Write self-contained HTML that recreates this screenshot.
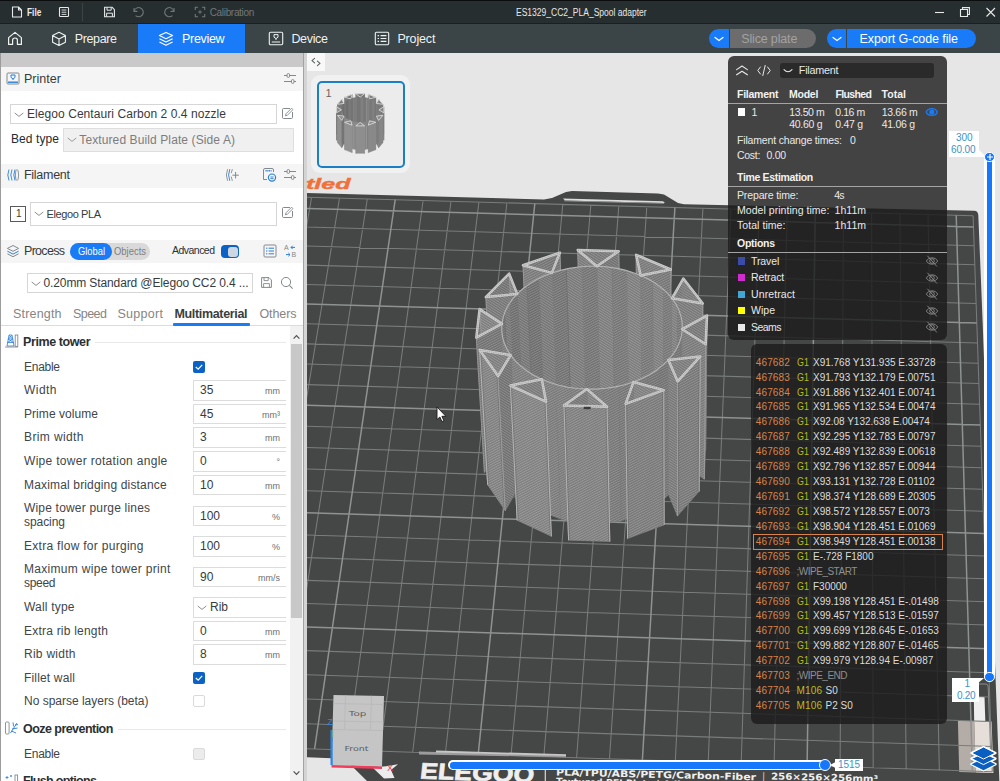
<!DOCTYPE html><html lang="en"><head><meta charset="utf-8"><title>ES1329_CC2_PLA_Spool adapter</title><style>
*{box-sizing:border-box;margin:0;padding:0}
html,body{width:1000px;height:781px;overflow:hidden;background:#fff}
body{font-family:"Liberation Sans",sans-serif;font-size:12px;color:#333}
#app{position:relative;width:1000px;height:781px;overflow:hidden;background:#fff}
.t{position:absolute;white-space:pre;display:block}
.a{position:absolute;display:block}
svg{position:absolute;display:block;overflow:visible}
#scene{left:0;top:0}
</style></head><body><div id="app">
<svg id="scene" width="1000" height="781" viewBox="0 0 1000 781">
<defs><clipPath id="vp"><rect x="307" y="53" width="693" height="728"/></clipPath><pattern id="hatch" width="2.2" height="2.2" patternUnits="userSpaceOnUse" patternTransform="rotate(-28)"><rect width="2.2" height="1" fill="#ffffff" opacity="0.17"/><rect y="1.1" width="2.2" height="1" fill="#000000" opacity="0.09"/></pattern><pattern id="hatch2" width="2.2" height="2.2" patternUnits="userSpaceOnUse" patternTransform="rotate(32)"><rect width="2.2" height="1" fill="#ffffff" opacity="0.17"/><rect y="1.1" width="2.2" height="1" fill="#000000" opacity="0.09"/></pattern></defs>
<g clip-path="url(#vp)">
<rect x="307" y="53" width="693" height="728" fill="#e6e6e6"/>
<path d="M300.0,192.7 L544.0,199.5 L552.0,197.9 L566.0,192.0 L572.0,191.0 L658.0,193.4 L664.0,194.6 L678.0,203.0 L684.0,204.2 L974.0,210.7 Q978.0,210.8 978.3,215.0 L982.7,323.3 L990.3,533.6 L999.0,771.9 L1000.8,823.6 L1002,790 L376,790 L367,781 L344.5,758.8 L300,757.1 Z" fill="#454746"/>
<path d="M563,198.6 L663,201.2 L665,203 L565,200.6 Z" fill="#dcdcdc"/>
<path d="M564,200.4 L664,203 L664,203.8 L564,201.2 Z" fill="#9a9a9a"/>
<polygon points="957.9,720.4 974.2,721.0 975.8,772.4 959.2,771.9" fill="#b4aca7"/>
<polygon points="974.2,721.0 991.6,721.5 993.4,773.0 975.8,772.4" fill="#e6ded8"/>
<polygon points="973.8,697 984.5,697 985.3,721 974.2,721" fill="#eeeeee"/>
<path d="M975,684 L986,684 Q988,684 988.2,687 L990.5,750" fill="none" stroke="#8c8f8e" stroke-width="1"/>
<path d="M151.6,743.5 L256.0,195.9 M184.1,744.6 L283.8,196.7 M216.7,745.7 L311.6,197.4 M249.3,746.7 L339.5,198.2 M281.9,747.8 L367.3,199.0 M347.3,750.0 L423.1,200.5 M380.0,751.1 L451.0,201.3 M412.7,752.2 L478.9,202.1 M445.4,753.3 L506.9,202.8 M511.0,755.5 L562.8,204.4 M543.8,756.6 L590.8,205.2 M576.6,757.7 L618.8,205.9 M609.5,758.8 L646.8,206.7 M675.3,761.1 L702.9,208.3 M708.2,762.2 L731.0,209.0 M741.2,763.3 L759.1,209.8 M774.1,764.4 L787.2,210.6 M840.1,766.6 L843.5,212.2 M873.2,767.7 L871.6,212.9 M906.2,768.8 L899.8,213.7 M939.3,769.9 L928.0,214.5 M992.3,771.7 L973.1,215.8 M151.6,743.5 L992.3,771.7 M156.3,718.7 L991.5,746.4 M161.0,694.2 L990.6,721.5 M165.6,670.1 L989.7,696.9 M170.2,646.2 L988.9,672.7 M179.1,599.5 L987.3,625.1 M183.5,576.5 L986.4,601.7 M187.9,553.9 L985.6,578.7 M192.1,531.5 L984.9,555.9 M200.5,487.5 L983.3,511.2 M204.7,466.0 L982.6,489.3 M208.7,444.6 L981.8,467.7 M212.8,423.5 L981.1,446.3 M220.6,382.1 L979.6,404.2 M224.5,361.7 L978.9,383.6 M228.4,341.6 L978.2,363.2 M232.1,321.7 L977.5,343.0 M239.6,282.6 L976.2,303.4 M243.2,263.3 L975.5,284.0 M246.8,244.3 L974.8,264.7 M250.4,225.5 L974.2,245.7 M256.0,195.9 L973.1,215.8 " stroke="#787c7a" stroke-width="1.05" fill="none"/>
<path d="M314.6,748.9 L395.2,199.7 M478.2,754.4 L534.8,203.6 M642.4,759.9 L674.9,207.5 M807.1,765.5 L815.3,211.4 M972.4,771.0 L956.2,215.3 M174.7,622.7 L988.1,648.7 M196.4,509.4 L984.1,533.4 M216.7,402.7 L980.3,425.1 M235.9,302.0 L976.8,323.1 M253.9,206.9 L973.5,226.9 " stroke="#8e9290" stroke-width="1.5" fill="none"/>
<polygon points="419,751.6 566,755.6 566,757.2 419,754.4" fill="#9c9c9c"/>
<polygon points="436,750.6 566,754.2 566,756 436,752.6" fill="#c6c6c6"/>
<polygon points="372.5,767.5 386,766.2 398,764.3 391,770 394.5,778 384,778.6" fill="#ececec"/>
<polygon points="618.7,251.2 577.7,250.0 581.6,385.0 620.9,386.2" fill="#7d7d7d" stroke="#7d7d7d" stroke-width="0.6"/>
<polygon points="618.7,251.2 577.7,250.0 581.6,385.0 620.9,386.2" fill="url(#hatch2)"/>
<path d="M618.7,251.2 L620.9,386.2" stroke="#b8b8b8" stroke-width="0.7" opacity="0.6"/>
<polygon points="618.7,251.2 596.9,266.2 600.0,401.2 620.9,386.2" fill="#767676" stroke="#767676" stroke-width="0.6"/>
<polygon points="618.7,251.2 596.9,266.2 600.0,401.2 620.9,386.2" fill="url(#hatch2)"/>
<path d="M618.7,251.2 L620.9,386.2" stroke="#b8b8b8" stroke-width="0.7" opacity="0.6"/>
<polygon points="577.7,250.0 596.9,266.2 600.0,401.2 581.6,385.0" fill="#7f7f7f" stroke="#7f7f7f" stroke-width="0.6"/>
<polygon points="577.7,250.0 596.9,266.2 600.0,401.2 581.6,385.0" fill="url(#hatch2)"/>
<path d="M577.7,250.0 L581.6,385.0" stroke="#b8b8b8" stroke-width="0.7" opacity="0.6"/>
<polygon points="670.8,269.5 636.1,254.8 637.5,389.8 670.9,404.5" fill="#7f7f7f" stroke="#7f7f7f" stroke-width="0.6"/>
<polygon points="670.8,269.5 636.1,254.8 637.5,389.8 670.9,404.5" fill="url(#hatch)"/>
<path d="M670.8,269.5 L670.9,404.5" stroke="#b8b8b8" stroke-width="0.7" opacity="0.6"/>
<polygon points="559.9,252.6 523.0,265.3 529.0,400.3 564.4,387.6" fill="#797979" stroke="#797979" stroke-width="0.6"/>
<polygon points="559.9,252.6 523.0,265.3 529.0,400.3 564.4,387.6" fill="url(#hatch)"/>
<path d="M559.9,252.6 L564.4,387.6" stroke="#b8b8b8" stroke-width="0.7" opacity="0.6"/>
<polygon points="636.1,254.8 640.7,275.5 642.0,410.5 637.5,389.8" fill="#7e7e7e" stroke="#7e7e7e" stroke-width="0.6"/>
<polygon points="636.1,254.8 640.7,275.5 642.0,410.5 637.5,389.8" fill="url(#hatch)"/>
<path d="M636.1,254.8 L637.5,389.8" stroke="#b8b8b8" stroke-width="0.7" opacity="0.6"/>
<polygon points="559.9,252.6 551.9,272.9 556.8,407.9 564.4,387.6" fill="#767676" stroke="#767676" stroke-width="0.6"/>
<polygon points="559.9,252.6 551.9,272.9 556.8,407.9 564.4,387.6" fill="url(#hatch)"/>
<path d="M559.9,252.6 L564.4,387.6" stroke="#b8b8b8" stroke-width="0.7" opacity="0.6"/>
<polygon points="612.3,267.6 596.9,266.2 600.0,401.2 614.7,402.6" fill="#828282" stroke="#828282" stroke-width="0.6"/>
<polygon points="612.3,267.6 596.9,266.2 600.0,401.2 614.7,402.6" fill="url(#hatch2)"/>
<path d="M612.3,267.6 L614.7,402.6" stroke="#6c6c6c" stroke-width="0.8" opacity="0.6"/>
<polygon points="596.9,266.2 581.5,266.7 585.2,401.7 600.0,401.2" fill="#787878" stroke="#787878" stroke-width="0.6"/>
<polygon points="596.9,266.2 581.5,266.7 585.2,401.7 600.0,401.2" fill="url(#hatch)"/>
<polygon points="627.0,270.7 612.3,267.6 614.7,402.6 628.8,405.7" fill="#7a7a7a" stroke="#7a7a7a" stroke-width="0.6"/>
<polygon points="627.0,270.7 612.3,267.6 614.7,402.6 628.8,405.7" fill="url(#hatch)"/>
<polygon points="581.5,266.7 566.3,269.0 570.6,403.9 585.2,401.7" fill="#7f7f7f" stroke="#7f7f7f" stroke-width="0.6"/>
<polygon points="581.5,266.7 566.3,269.0 570.6,403.9 585.2,401.7" fill="url(#hatch2)"/>
<polygon points="670.8,269.5 640.7,275.5 642.0,410.5 670.9,404.5" fill="#7b7b7b" stroke="#7b7b7b" stroke-width="0.6"/>
<polygon points="670.8,269.5 640.7,275.5 642.0,410.5 670.9,404.5" fill="url(#hatch)"/>
<path d="M670.8,269.5 L670.9,404.5" stroke="#b8b8b8" stroke-width="0.7" opacity="0.6"/>
<polygon points="523.0,265.3 551.9,272.9 556.8,407.9 529.0,400.3" fill="#7f7f7f" stroke="#7f7f7f" stroke-width="0.6"/>
<polygon points="523.0,265.3 551.9,272.9 556.8,407.9 529.0,400.3" fill="url(#hatch)"/>
<path d="M523.0,265.3 L529.0,400.3" stroke="#b8b8b8" stroke-width="0.7" opacity="0.6"/>
<polygon points="640.7,275.5 627.0,270.7 628.8,405.7 642.0,410.5" fill="#838383" stroke="#838383" stroke-width="0.6"/>
<polygon points="640.7,275.5 627.0,270.7 628.8,405.7 642.0,410.5" fill="url(#hatch2)"/>
<polygon points="566.3,269.0 551.9,272.9 556.8,407.9 570.6,403.9" fill="#767676" stroke="#767676" stroke-width="0.6"/>
<polygon points="566.3,269.0 551.9,272.9 556.8,407.9 570.6,403.9" fill="url(#hatch)"/>
<path d="M566.3,269.0 L570.6,403.9" stroke="#6c6c6c" stroke-width="0.8" opacity="0.6"/>
<polygon points="653.0,281.8 640.7,275.5 642.0,410.5 653.8,416.8" fill="#7b7b7b" stroke="#7b7b7b" stroke-width="0.6"/>
<polygon points="653.0,281.8 640.7,275.5 642.0,410.5 653.8,416.8" fill="url(#hatch)"/>
<path d="M653.0,281.8 L653.8,416.8" stroke="#6c6c6c" stroke-width="0.8" opacity="0.6"/>
<polygon points="551.9,272.9 538.7,278.5 544.1,413.5 556.8,407.9" fill="#7c7c7c" stroke="#7c7c7c" stroke-width="0.6"/>
<polygon points="551.9,272.9 538.7,278.5 544.1,413.5 556.8,407.9" fill="url(#hatch2)"/>
<polygon points="663.5,289.5 653.0,281.8 653.8,416.8 663.9,424.5" fill="#838383" stroke="#838383" stroke-width="0.6"/>
<polygon points="663.5,289.5 653.0,281.8 653.8,416.8 663.9,424.5" fill="url(#hatch2)"/>
<polygon points="538.7,278.5 527.0,285.6 532.9,420.5 544.1,413.5" fill="#727272" stroke="#727272" stroke-width="0.6"/>
<polygon points="538.7,278.5 527.0,285.6 532.9,420.5 544.1,413.5" fill="url(#hatch)"/>
<polygon points="683.3,278.6 672.0,298.3 672.0,433.3 682.9,413.6" fill="#7a7a7a" stroke="#7a7a7a" stroke-width="0.6"/>
<polygon points="683.3,278.6 672.0,298.3 672.0,433.3 682.9,413.6" fill="url(#hatch2)"/>
<path d="M683.3,278.6 L682.9,413.6" stroke="#b8b8b8" stroke-width="0.7" opacity="0.6"/>
<polygon points="509.2,273.6 517.2,293.9 523.5,428.9 515.8,408.6" fill="#838383" stroke="#838383" stroke-width="0.6"/>
<polygon points="509.2,273.6 517.2,293.9 523.5,428.9 515.8,408.6" fill="url(#hatch2)"/>
<path d="M509.2,273.6 L515.8,408.6" stroke="#b8b8b8" stroke-width="0.7" opacity="0.6"/>
<polygon points="702.8,303.4 683.3,278.6 682.9,413.6 701.6,438.4" fill="#7f7f7f" stroke="#7f7f7f" stroke-width="0.6"/>
<polygon points="702.8,303.4 683.3,278.6 682.9,413.6 701.6,438.4" fill="url(#hatch2)"/>
<path d="M702.8,303.4 L701.6,438.4" stroke="#b8b8b8" stroke-width="0.7" opacity="0.6"/>
<polygon points="509.2,273.6 485.8,297.1 493.4,432.1 515.8,408.6" fill="#767676" stroke="#767676" stroke-width="0.6"/>
<polygon points="509.2,273.6 485.8,297.1 493.4,432.1 515.8,408.6" fill="url(#hatch2)"/>
<path d="M509.2,273.6 L515.8,408.6" stroke="#b8b8b8" stroke-width="0.7" opacity="0.6"/>
<polygon points="672.0,298.3 663.5,289.5 663.9,424.5 672.0,433.3" fill="#7b7b7b" stroke="#7b7b7b" stroke-width="0.6"/>
<polygon points="672.0,298.3 663.5,289.5 663.9,424.5 672.0,433.3" fill="url(#hatch)"/>
<polygon points="527.0,285.6 517.2,293.9 523.5,428.9 532.9,420.5" fill="#7a7a7a" stroke="#7a7a7a" stroke-width="0.6"/>
<polygon points="527.0,285.6 517.2,293.9 523.5,428.9 532.9,420.5" fill="url(#hatch2)"/>
<path d="M527.0,285.6 L532.9,420.5" stroke="#6c6c6c" stroke-width="0.8" opacity="0.6"/>
<polygon points="702.8,303.4 672.0,298.3 672.0,433.3 701.6,438.4" fill="#7e7e7e" stroke="#7e7e7e" stroke-width="0.6"/>
<polygon points="702.8,303.4 672.0,298.3 672.0,433.3 701.6,438.4" fill="url(#hatch2)"/>
<path d="M702.8,303.4 L701.6,438.4" stroke="#b8b8b8" stroke-width="0.7" opacity="0.6"/>
<polygon points="485.8,297.1 517.2,293.9 523.5,428.9 493.4,432.1" fill="#7c7c7c" stroke="#7c7c7c" stroke-width="0.6"/>
<polygon points="485.8,297.1 517.2,293.9 523.5,428.9 493.4,432.1" fill="url(#hatch2)"/>
<path d="M485.8,297.1 L493.4,432.1" stroke="#b8b8b8" stroke-width="0.7" opacity="0.6"/>
<polygon points="678.0,308.1 672.0,298.3 672.0,433.3 677.8,443.1" fill="#838383" stroke="#838383" stroke-width="0.6"/>
<polygon points="678.0,308.1 672.0,298.3 672.0,433.3 677.8,443.1" fill="url(#hatch2)"/>
<path d="M678.0,308.1 L677.8,443.1" stroke="#6c6c6c" stroke-width="0.8" opacity="0.6"/>
<polygon points="517.2,293.9 509.6,303.3 516.2,438.2 523.5,428.9" fill="#727272" stroke="#727272" stroke-width="0.6"/>
<polygon points="517.2,293.9 509.6,303.3 516.2,438.2 523.5,428.9" fill="url(#hatch)"/>
<polygon points="681.5,318.5 678.0,308.1 677.8,443.1 681.2,453.4" fill="#7a7a7a" stroke="#7a7a7a" stroke-width="0.6"/>
<polygon points="681.5,318.5 678.0,308.1 677.8,443.1 681.2,453.4" fill="url(#hatch)"/>
<polygon points="509.6,303.3 504.4,313.4 511.3,448.3 516.2,438.2" fill="#7a7a7a" stroke="#7a7a7a" stroke-width="0.6"/>
<polygon points="509.6,303.3 504.4,313.4 511.3,448.3 516.2,438.2" fill="url(#hatch2)"/>
<polygon points="707.0,315.6 682.3,329.2 681.9,464.1 705.6,450.6" fill="#7b7b7b" stroke="#7b7b7b" stroke-width="0.6"/>
<polygon points="707.0,315.6 682.3,329.2 681.9,464.1 705.6,450.6" fill="url(#hatch2)"/>
<path d="M707.0,315.6 L705.6,450.6" stroke="#b8b8b8" stroke-width="0.7" opacity="0.6"/>
<polygon points="479.6,309.1 501.9,323.9 508.9,458.8 487.5,444.0" fill="#858585" stroke="#858585" stroke-width="0.6"/>
<polygon points="479.6,309.1 501.9,323.9 508.9,458.8 487.5,444.0" fill="url(#hatch2)"/>
<path d="M479.6,309.1 L487.5,444.0" stroke="#b8b8b8" stroke-width="0.7" opacity="0.6"/>
<polygon points="682.3,329.2 681.5,318.5 681.2,453.4 681.9,464.1" fill="#818181" stroke="#818181" stroke-width="0.6"/>
<polygon points="682.3,329.2 681.5,318.5 681.2,453.4 681.9,464.1" fill="url(#hatch2)"/>
<polygon points="504.4,313.4 501.9,323.9 508.9,458.8 511.3,448.3" fill="#727272" stroke="#727272" stroke-width="0.6"/>
<polygon points="504.4,313.4 501.9,323.9 508.9,458.8 511.3,448.3" fill="url(#hatch)"/>
<path d="M504.4,313.4 L511.3,448.3" stroke="#6c6c6c" stroke-width="0.8" opacity="0.6"/>
<polygon points="705.7,344.3 707.0,315.6 705.6,450.6 704.3,479.2" fill="#7c7c7c" stroke="#7c7c7c" stroke-width="0.6"/>
<polygon points="705.7,344.3 707.0,315.6 705.6,450.6 704.3,479.2" fill="url(#hatch)"/>
<path d="M705.7,344.3 L704.3,479.2" stroke="#b8b8b8" stroke-width="0.7" opacity="0.6"/>
<polygon points="479.6,309.1 476.3,337.6 484.4,472.4 487.5,444.0" fill="#767676" stroke="#767676" stroke-width="0.6"/>
<polygon points="479.6,309.1 476.3,337.6 484.4,472.4 487.5,444.0" fill="url(#hatch)"/>
<path d="M479.6,309.1 L487.5,444.0" stroke="#b8b8b8" stroke-width="0.7" opacity="0.6"/>
<polygon points="680.4,339.9 682.3,329.2 681.9,464.1 680.1,474.8" fill="#767676" stroke="#767676" stroke-width="0.6"/>
<polygon points="680.4,339.9 682.3,329.2 681.9,464.1 680.1,474.8" fill="url(#hatch)"/>
<polygon points="501.9,323.9 502.1,334.7 509.1,469.5 508.9,458.8" fill="#7e7e7e" stroke="#7e7e7e" stroke-width="0.6"/>
<polygon points="501.9,323.9 502.1,334.7 509.1,469.5 508.9,458.8" fill="url(#hatch)"/>
<polygon points="705.7,344.3 682.3,329.2 681.9,464.1 704.3,479.2" fill="#7f7f7f" stroke="#7f7f7f" stroke-width="0.6"/>
<polygon points="705.7,344.3 682.3,329.2 681.9,464.1 704.3,479.2" fill="url(#hatch)"/>
<path d="M705.7,344.3 L704.3,479.2" stroke="#b8b8b8" stroke-width="0.7" opacity="0.6"/>
<polygon points="476.3,337.6 501.9,323.9 508.9,458.8 484.4,472.4" fill="#777777" stroke="#777777" stroke-width="0.6"/>
<polygon points="476.3,337.6 501.9,323.9 508.9,458.8 484.4,472.4" fill="url(#hatch)"/>
<path d="M476.3,337.6 L484.4,472.4" stroke="#b8b8b8" stroke-width="0.7" opacity="0.6"/>
<polygon points="675.7,350.2 680.4,339.9 680.1,474.8 675.6,485.1" fill="#767676" stroke="#767676" stroke-width="0.6"/>
<polygon points="675.7,350.2 680.4,339.9 680.1,474.8 675.6,485.1" fill="url(#hatch)"/>
<polygon points="502.1,334.7 505.1,345.2 512.0,480.1 509.1,469.5" fill="#7f7f7f" stroke="#7f7f7f" stroke-width="0.6"/>
<polygon points="502.1,334.7 505.1,345.2 512.0,480.1 509.1,469.5" fill="url(#hatch)"/>
<polygon points="668.4,359.9 675.7,350.2 675.6,485.1 668.6,494.7" fill="#767676" stroke="#767676" stroke-width="0.6"/>
<polygon points="668.4,359.9 675.7,350.2 675.6,485.1 668.6,494.7" fill="url(#hatch)"/>
<polygon points="505.1,345.2 510.7,355.2 517.4,490.1 512.0,480.1" fill="#808080" stroke="#808080" stroke-width="0.6"/>
<polygon points="505.1,345.2 510.7,355.2 517.4,490.1 512.0,480.1" fill="url(#hatch)"/>
<polygon points="700.2,356.5 668.4,359.9 668.6,494.7 699.1,491.4" fill="#808080" stroke="#808080" stroke-width="0.6"/>
<polygon points="700.2,356.5 668.4,359.9 668.6,494.7 699.1,491.4" fill="url(#hatch2)"/>
<path d="M700.2,356.5 L699.1,491.4" stroke="#b8b8b8" stroke-width="0.7" opacity="0.6"/>
<polygon points="479.7,350.1 510.7,355.2 517.4,490.1 487.7,484.9" fill="#838383" stroke="#838383" stroke-width="0.6"/>
<polygon points="479.7,350.1 510.7,355.2 517.4,490.1 487.7,484.9" fill="url(#hatch2)"/>
<path d="M479.7,350.1 L487.7,484.9" stroke="#b8b8b8" stroke-width="0.7" opacity="0.6"/>
<polygon points="658.7,368.6 668.4,359.9 668.6,494.7 659.3,503.4" fill="#767676" stroke="#767676" stroke-width="0.6"/>
<polygon points="658.7,368.6 668.4,359.9 668.6,494.7 659.3,503.4" fill="url(#hatch)"/>
<polygon points="510.7,355.2 518.9,364.5 525.2,499.3 517.4,490.1" fill="#808080" stroke="#808080" stroke-width="0.6"/>
<polygon points="510.7,355.2 518.9,364.5 525.2,499.3 517.4,490.1" fill="url(#hatch)"/>
<polygon points="677.6,381.3 700.2,356.5 699.1,491.4 677.4,516.1" fill="#7c7c7c" stroke="#7c7c7c" stroke-width="0.6"/>
<polygon points="677.6,381.3 700.2,356.5 699.1,491.4 677.4,516.1" fill="url(#hatch)"/>
<path d="M677.6,381.3 L677.4,516.1 M700.2,356.5 L699.1,491.4" stroke="#c2c2c2" stroke-width="0.9" opacity="0.8"/>
<path d="M678.7,381.3 L678.5,516.1 M699.1,356.5 L698.0,491.4" stroke="#686868" stroke-width="0.8" opacity="0.55"/>
<polygon points="479.7,350.1 498.1,376.0 505.3,510.7 487.7,484.9" fill="#868686" stroke="#868686" stroke-width="0.6"/>
<polygon points="479.7,350.1 498.1,376.0 505.3,510.7 487.7,484.9" fill="url(#hatch)"/>
<path d="M479.7,350.1 L487.7,484.9 M498.1,376.0 L505.3,510.7" stroke="#c2c2c2" stroke-width="0.9" opacity="0.8"/>
<path d="M480.8,350.1 L488.8,484.9 M497.0,376.0 L504.2,510.7" stroke="#686868" stroke-width="0.8" opacity="0.55"/>
<polygon points="677.6,381.3 668.4,359.9 668.6,494.7 677.4,516.1" fill="#7e7e7e" stroke="#7e7e7e" stroke-width="0.6"/>
<polygon points="677.6,381.3 668.4,359.9 668.6,494.7 677.4,516.1" fill="url(#hatch2)"/>
<path d="M677.6,381.3 L677.4,516.1" stroke="#b8b8b8" stroke-width="0.7" opacity="0.6"/>
<polygon points="498.1,376.0 510.7,355.2 517.4,490.1 505.3,510.7" fill="#767676" stroke="#767676" stroke-width="0.6"/>
<polygon points="498.1,376.0 510.7,355.2 517.4,490.1 505.3,510.7" fill="url(#hatch2)"/>
<path d="M498.1,376.0 L505.3,510.7" stroke="#b8b8b8" stroke-width="0.7" opacity="0.6"/>
<polygon points="647.0,376.0 658.7,368.6 659.3,503.4 648.1,510.8" fill="#777777" stroke="#777777" stroke-width="0.6"/>
<polygon points="647.0,376.0 658.7,368.6 659.3,503.4 648.1,510.8" fill="url(#hatch)"/>
<polygon points="518.9,364.5 529.3,372.6 535.3,507.3 525.2,499.3" fill="#818181" stroke="#818181" stroke-width="0.6"/>
<polygon points="518.9,364.5 529.3,372.6 535.3,507.3 525.2,499.3" fill="url(#hatch)"/>
<polygon points="633.5,382.0 647.0,376.0 648.1,510.8 635.1,516.8" fill="#787878" stroke="#787878" stroke-width="0.6"/>
<polygon points="633.5,382.0 647.0,376.0 648.1,510.8 635.1,516.8" fill="url(#hatch)"/>
<polygon points="529.3,372.6 541.8,379.3 547.2,514.0 535.3,507.3" fill="#818181" stroke="#818181" stroke-width="0.6"/>
<polygon points="529.3,372.6 541.8,379.3 547.2,514.0 535.3,507.3" fill="url(#hatch)"/>
<polygon points="618.6,386.2 633.5,382.0 635.1,516.8 620.9,521.0" fill="#7a7a7a" stroke="#7a7a7a" stroke-width="0.6"/>
<polygon points="618.6,386.2 633.5,382.0 635.1,516.8 620.9,521.0" fill="url(#hatch)"/>
<polygon points="541.8,379.3 555.8,384.4 560.7,519.1 547.2,514.0" fill="#808080" stroke="#808080" stroke-width="0.6"/>
<polygon points="541.8,379.3 555.8,384.4 560.7,519.1 547.2,514.0" fill="url(#hatch)"/>
<polygon points="663.7,390.1 633.5,382.0 635.1,516.8 664.1,524.9" fill="#848484" stroke="#848484" stroke-width="0.6"/>
<polygon points="663.7,390.1 633.5,382.0 635.1,516.8 664.1,524.9" fill="url(#hatch2)"/>
<path d="M663.7,390.1 L664.1,524.9" stroke="#b8b8b8" stroke-width="0.7" opacity="0.6"/>
<polygon points="510.4,385.6 541.8,379.3 547.2,514.0 517.2,520.3" fill="#7f7f7f" stroke="#7f7f7f" stroke-width="0.6"/>
<polygon points="510.4,385.6 541.8,379.3 547.2,514.0 517.2,520.3" fill="url(#hatch2)"/>
<path d="M510.4,385.6 L517.2,520.3" stroke="#b8b8b8" stroke-width="0.7" opacity="0.6"/>
<polygon points="602.9,388.7 618.6,386.2 620.9,521.0 605.9,523.4" fill="#7c7c7c" stroke="#7c7c7c" stroke-width="0.6"/>
<polygon points="602.9,388.7 618.6,386.2 620.9,521.0 605.9,523.4" fill="url(#hatch)"/>
<polygon points="555.8,384.4 571.0,387.7 575.3,522.5 560.7,519.1" fill="#808080" stroke="#808080" stroke-width="0.6"/>
<polygon points="555.8,384.4 571.0,387.7 575.3,522.5 560.7,519.1" fill="url(#hatch)"/>
<polygon points="586.9,389.1 602.9,388.7 605.9,523.4 590.5,523.9" fill="#7d7d7d" stroke="#7d7d7d" stroke-width="0.6"/>
<polygon points="586.9,389.1 602.9,388.7 605.9,523.4 590.5,523.9" fill="url(#hatch)"/>
<polygon points="571.0,387.7 586.9,389.1 590.5,523.9 575.3,522.5" fill="#7f7f7f" stroke="#7f7f7f" stroke-width="0.6"/>
<polygon points="571.0,387.7 586.9,389.1 590.5,523.9 575.3,522.5" fill="url(#hatch)"/>
<polygon points="625.6,403.9 633.5,382.0 635.1,516.8 627.6,538.6" fill="#7a7a7a" stroke="#7a7a7a" stroke-width="0.6"/>
<polygon points="625.6,403.9 633.5,382.0 635.1,516.8 627.6,538.6" fill="url(#hatch2)"/>
<path d="M625.6,403.9 L627.6,538.6" stroke="#b8b8b8" stroke-width="0.7" opacity="0.6"/>
<polygon points="546.0,401.6 541.8,379.3 547.2,514.0 551.3,536.3" fill="#838383" stroke="#838383" stroke-width="0.6"/>
<polygon points="546.0,401.6 541.8,379.3 547.2,514.0 551.3,536.3" fill="url(#hatch2)"/>
<path d="M546.0,401.6 L551.3,536.3" stroke="#b8b8b8" stroke-width="0.7" opacity="0.6"/>
<polygon points="625.6,403.9 663.7,390.1 664.1,524.9 627.6,538.6" fill="#7f7f7f" stroke="#7f7f7f" stroke-width="0.6"/>
<polygon points="625.6,403.9 663.7,390.1 664.1,524.9 627.6,538.6" fill="url(#hatch)"/>
<path d="M625.6,403.9 L627.6,538.6 M663.7,390.1 L664.1,524.9" stroke="#c2c2c2" stroke-width="0.9" opacity="0.8"/>
<path d="M626.7,403.9 L628.7,538.6 M662.6,390.1 L663.0,524.9" stroke="#686868" stroke-width="0.8" opacity="0.55"/>
<polygon points="510.4,385.6 546.0,401.6 551.3,536.3 517.2,520.3" fill="#878787" stroke="#878787" stroke-width="0.6"/>
<polygon points="510.4,385.6 546.0,401.6 551.3,536.3 517.2,520.3" fill="url(#hatch)"/>
<path d="M510.4,385.6 L517.2,520.3 M546.0,401.6 L551.3,536.3" stroke="#c2c2c2" stroke-width="0.9" opacity="0.8"/>
<path d="M511.5,385.6 L518.3,520.3 M544.9,401.6 L550.2,536.3" stroke="#686868" stroke-width="0.8" opacity="0.55"/>
<polygon points="607.0,406.8 586.9,389.1 590.5,523.9 609.8,541.5" fill="#858585" stroke="#858585" stroke-width="0.6"/>
<polygon points="607.0,406.8 586.9,389.1 590.5,523.9 609.8,541.5" fill="url(#hatch2)"/>
<path d="M607.0,406.8 L609.8,541.5" stroke="#b8b8b8" stroke-width="0.7" opacity="0.6"/>
<polygon points="564.0,405.5 586.9,389.1 590.5,523.9 568.6,540.2" fill="#7a7a7a" stroke="#7a7a7a" stroke-width="0.6"/>
<polygon points="564.0,405.5 586.9,389.1 590.5,523.9 568.6,540.2" fill="url(#hatch2)"/>
<path d="M564.0,405.5 L568.6,540.2" stroke="#b8b8b8" stroke-width="0.7" opacity="0.6"/>
<polygon points="564.0,405.5 607.0,406.8 609.8,541.5 568.6,540.2" fill="#848484" stroke="#848484" stroke-width="0.6"/>
<polygon points="564.0,405.5 607.0,406.8 609.8,541.5 568.6,540.2" fill="url(#hatch)"/>
<path d="M564.0,405.5 L568.6,540.2 M607.0,406.8 L609.8,541.5" stroke="#c2c2c2" stroke-width="0.9" opacity="0.8"/>
<path d="M565.1,405.5 L569.7,540.2 M605.9,406.8 L608.7,541.5" stroke="#686868" stroke-width="0.8" opacity="0.55"/>
<path d="M682.3,329.2 L682.2,322.7 L681.0,316.4 L678.9,310.1 L675.9,304.1 L672.0,298.3 L667.2,292.9 L661.6,287.9 L655.3,283.2 L648.3,279.1 L640.7,275.5 L632.6,272.4 L624.1,269.9 L615.3,268.1 L606.2,266.8 L596.9,266.2 L587.7,266.3 L578.4,267.0 L569.3,268.4 L560.5,270.4 L551.9,272.9 L543.8,276.1 L536.2,279.8 L529.2,284.1 L522.8,288.8 L517.2,293.9 L512.3,299.4 L508.3,305.2 L505.2,311.3 L503.1,317.6 L501.9,323.9 L501.7,330.4 L502.5,336.8 L504.2,343.1 L507.0,349.3 L510.7,355.2 L515.3,360.9 L520.8,366.2 L527.1,371.0 L534.1,375.4 L541.8,379.3 L550.0,382.5 L558.8,385.2 L567.9,387.2 L577.3,388.5 L586.9,389.1 L596.5,389.1 L606.1,388.3 L615.5,386.9 L624.7,384.7 L633.5,382.0 L641.8,378.6 L649.5,374.7 L656.5,370.2 L662.9,365.2 L668.4,359.9 L673.1,354.2 L676.8,348.2 L679.6,342.0 L681.5,335.6 Z" fill="none" stroke="#b4b4b4" stroke-width="1.1"/>
<path d="M705.7,344.3 L707.0,315.6 L682.3,329.2 Z M702.8,303.4 L683.3,278.6 L672.0,298.3 Z M670.8,269.5 L636.1,254.8 L640.7,275.5 Z M618.7,251.2 L577.7,250.0 L596.9,266.2 Z M559.9,252.6 L523.0,265.3 L551.9,272.9 Z M509.2,273.6 L485.8,297.1 L517.2,293.9 Z M479.6,309.1 L476.3,337.6 L501.9,323.9 Z M479.7,350.1 L498.1,376.0 L510.7,355.2 Z M510.4,385.6 L546.0,401.6 L541.8,379.3 Z M564.0,405.5 L607.0,406.8 L586.9,389.1 Z M625.6,403.9 L663.7,390.1 L633.5,382.0 Z M677.6,381.3 L700.2,356.5 L668.4,359.9 Z " fill="none" stroke="#cecece" stroke-width="2.5" stroke-linejoin="round"/>
<path d="M705.7,344.3 L707.0,315.6 L682.3,329.2 Z M702.8,303.4 L683.3,278.6 L672.0,298.3 Z M670.8,269.5 L636.1,254.8 L640.7,275.5 Z M618.7,251.2 L577.7,250.0 L596.9,266.2 Z M559.9,252.6 L523.0,265.3 L551.9,272.9 Z M509.2,273.6 L485.8,297.1 L517.2,293.9 Z M479.6,309.1 L476.3,337.6 L501.9,323.9 Z M479.7,350.1 L498.1,376.0 L510.7,355.2 Z M510.4,385.6 L546.0,401.6 L541.8,379.3 Z M564.0,405.5 L607.0,406.8 L586.9,389.1 Z M625.6,403.9 L663.7,390.1 L633.5,382.0 Z M677.6,381.3 L700.2,356.5 L668.4,359.9 Z " fill="none" stroke="#8c8c8c" stroke-width="0.6" stroke-linejoin="round" stroke-dasharray="1.2 1"/>
<rect x="583.7" y="406.8" width="7" height="2.4" fill="#3c3c3c"/>
<g font-family="Liberation Sans, sans-serif" font-weight="700" fill="#efefef">
<text transform="translate(419.6,778.4) rotate(2.1) skewX(-4)" font-size="22.5" textLength="114" lengthAdjust="spacingAndGlyphs" stroke="#efefef" stroke-width="0.7">ELEGOO</text>
<path d="M545.3,769 L545.3,783" stroke="#d8d8d8" stroke-width="1.2"/>
<g font-family="DejaVu Sans, sans-serif">
<text transform="translate(556,775.4) rotate(1.4)" font-size="9.4" textLength="200" lengthAdjust="spacingAndGlyphs">PLA/TPU/ABS/PETG/Carbon-Fiber</text>
<text transform="translate(762,779.2) rotate(1.4)" font-size="9.4" font-weight="400" fill="#cfcfcf">|</text>
<text transform="translate(771,779.4) rotate(1.4)" font-size="9.4" textLength="107" lengthAdjust="spacingAndGlyphs">256×256×256mm³</text>
<text transform="translate(556,784.6) rotate(1.4)" font-size="9.4" textLength="225" lengthAdjust="spacingAndGlyphs">Textured PEI Plate | Adhesive not required</text>
</g></g>
<polygon points="333.5,695 384,696 382,767 331.5,765" fill="#c5c5c5"/>
<path d="M333,729.5 L383,730.5 M345.5,695.2 L344.5,729.6 M371.5,695.8 L370.5,730.2 M333.3,703.5 L383.8,704.5 M333.2,721 L383.4,722" stroke="#b7b7b7" stroke-width="0.8" fill="none"/>
<g font-family="DejaVu Sans, sans-serif" font-size="6.9" fill="#5e5e5e" text-anchor="middle"><text x="357.6" y="715.9" textLength="17.5" lengthAdjust="spacingAndGlyphs">Top</text><text x="356.6" y="751" textLength="24" lengthAdjust="spacingAndGlyphs">Front</text></g>
<path d="M331.6,730 L331.6,765" stroke="#2a86e8" stroke-width="2.2"/>
<path d="M333,730 L333,737" stroke="#9bd05a" stroke-width="0.8"/>
<path d="M331.5,766.2 L382,767.8" stroke="#f23c5c" stroke-width="2.4"/>
<g font-family="Liberation Sans, sans-serif" font-size="9"><text x="327.6" y="724.6" fill="#2a86e8">Z</text><text x="387" y="771.4" fill="#e8385a">X</text></g>
</g>
</svg>
<div class="a" style="left:0px;top:0px;width:1000px;height:24px;background:#272e30;border-top:1px solid #0c0d0e;border-bottom:1px solid #1b1f21"></div>
<svg style="left:11px;top:6px" width="12" height="12" viewBox="0 0 12 12"><path d="M1.5,1 H7.5 L10.5,4 V11 H1.5 Z M7.5,1 V4 H10.5" fill="none" stroke="#e8eaea" stroke-width="1.1" stroke-linejoin="round"/></svg>
<span class="t" style="left:27.0px;top:4.8px;line-height:15px;font-size:11px;color:#e8eaea;font-weight:700;transform:scaleX(0.7545);transform-origin:0 50%;">File</span>
<svg style="left:58px;top:6px" width="12" height="12" viewBox="0 0 12 12"><rect x="1.5" y="1.5" width="9" height="9" rx="0.8" fill="none" stroke="#e8eaea" stroke-width="1.1"/><path d="M3.6,4 H8.4 M3.6,6.2 H8.4 M3.6,8.4 H8.4" stroke="#e8eaea" stroke-width="0.9"/></svg>
<div class="a" style="left:82px;top:3px;width:1px;height:18px;background:#3d4447"></div>
<svg style="left:103px;top:6px" width="13" height="12" viewBox="0 0 13 12"><path d="M1.6,1.2 H9 L11.4,3.6 V10.8 H1.6 Z" fill="none" stroke="#e8eaea" stroke-width="1.1" stroke-linejoin="round"/><path d="M4,1.4 V4.2 H8.2 V1.4 M3.6,10.6 V7.2 H9.4 V10.6" fill="none" stroke="#e8eaea" stroke-width="1"/></svg>
<svg style="left:132px;top:6px" width="13" height="12" viewBox="0 0 13 12"><path d="M2,2 V5.4 H5.4" fill="none" stroke="#72787a" stroke-width="1.1"/><path d="M2.2,5.2 A4.6,4.6 0 1 1 3.6,9.6" fill="none" stroke="#72787a" stroke-width="1.1"/></svg>
<svg style="left:163px;top:6px" width="13" height="12" viewBox="0 0 13 12"><path d="M11,2 V5.4 H7.6" fill="none" stroke="#72787a" stroke-width="1.1"/><path d="M10.8,5.2 A4.6,4.6 0 1 0 9.4,9.6" fill="none" stroke="#72787a" stroke-width="1.1"/></svg>
<svg style="left:194px;top:6px" width="12" height="12" viewBox="0 0 12 12"><path d="M1.3,4 V1.3 H4 M8,1.3 H10.7 V4 M10.7,8 V10.7 H8 M4,10.7 H1.3 V8" fill="none" stroke="#72787a" stroke-width="1.1"/><path d="M6,4.2 V7.8 M4.2,6 H7.8" stroke="#72787a" stroke-width="1"/></svg>
<span class="t" style="left:209.7px;top:6.3px;line-height:14px;font-size:10px;color:#72787a;letter-spacing:-0.321px;">Calibration</span>
<span class="t" style="left:515.6px;top:6.2px;line-height:14px;font-size:10px;color:#e6e8e8;transform:scaleX(0.8517);transform-origin:0 50%;">ES1329_CC2_PLA_Spool adapter</span>
<svg style="left:933px;top:6px" width="64" height="12" viewBox="0 0 64 12"><path d="M2,6.5 H11" stroke="#e8eaea" stroke-width="1.1"/><path d="M27.5,3.5 H34.5 V10.5 H27.5 Z M29.5,3.3 V1.6 H36.4 V8.5 H34.7" fill="none" stroke="#e8eaea" stroke-width="1.1"/><path d="M53.5,2 L62,10.5 M62,2 L53.5,10.5" stroke="#e8eaea" stroke-width="1.1"/></svg>
<div class="a" style="left:0px;top:24px;width:1000px;height:29px;background:#3b4446"></div>
<div class="a" style="left:138px;top:24px;width:107px;height:29px;background:#1a7bf8"></div>
<svg style="left:7px;top:31px" width="16" height="15" viewBox="0 0 16 15"><path d="M1.6,6.6 L8,1.4 L14.4,6.6 V13.4 H10.4 V9.2 Q10.4,7 8,7 Q5.6,7 5.6,9.2 V13.4 H1.6 Z" fill="none" stroke="#f0f2f2" stroke-width="1.2" stroke-linejoin="round"/></svg>
<svg style="left:51px;top:31px" width="16" height="16" viewBox="0 0 16 16"><path d="M8,1.3 L14.4,4.6 V11.2 L8,14.6 L1.6,11.2 V4.6 Z M1.8,4.8 L8,8 L14.2,4.8 M8,8 V14.4" fill="none" stroke="#f0f2f2" stroke-width="1.1" stroke-linejoin="round"/></svg>
<span class="t" style="left:74.8px;top:30.0px;line-height:18px;font-size:12.5px;color:#f0f2f2;letter-spacing:-0.381px;">Prepare</span>
<svg style="left:158px;top:31px" width="16" height="16" viewBox="0 0 16 16"><path d="M8,1.4 L14.6,4.6 L8,7.8 L1.4,4.6 Z" fill="none" stroke="#fff" stroke-width="1.1" stroke-linejoin="round"/><path d="M1.4,7.8 L8,11 L14.6,7.8 M1.4,11 L8,14.2 L14.6,11" fill="none" stroke="#fff" stroke-width="1.1" stroke-linejoin="round"/></svg>
<span class="t" style="left:182.0px;top:30.0px;line-height:18px;font-size:12.5px;color:#ffffff;letter-spacing:-0.311px;">Preview</span>
<svg style="left:268px;top:31px" width="16" height="15" viewBox="0 0 16 15"><rect x="1.3" y="1.3" width="13.4" height="12.4" rx="1.2" fill="none" stroke="#f0f2f2" stroke-width="1.1"/><path d="M6,3.6 H10 V6.2 L8,7.6 L6,6.2 Z M8,7.6 V9 M3.8,11 H12.2" fill="none" stroke="#f0f2f2" stroke-width="1"/></svg>
<span class="t" style="left:291.4px;top:30.0px;line-height:18px;font-size:12.5px;color:#f0f2f2;letter-spacing:-0.324px;">Device</span>
<svg style="left:374px;top:31px" width="16" height="15" viewBox="0 0 16 15"><rect x="1.3" y="1.3" width="13.4" height="12.4" rx="1.2" fill="none" stroke="#f0f2f2" stroke-width="1.1"/><path d="M3.6,4.6 H5 M6.6,4.6 H12.4 M3.6,7.5 H5 M6.6,7.5 H12.4 M3.6,10.4 H5 M6.6,10.4 H12.4" stroke="#f0f2f2" stroke-width="1.1"/></svg>
<span class="t" style="left:397.4px;top:30.0px;line-height:18px;font-size:12.5px;color:#f0f2f2;letter-spacing:-0.151px;">Project</span>
<div class="a" style="left:709px;top:29px;width:19.5px;height:19px;background:#1a7bf8;border-radius:9.5px 0 0 9.5px"></div>
<div class="a" style="left:729.5px;top:29px;width:86.0px;height:19px;background:#6c6c6c;border-radius:0 9.5px 9.5px 0"></div>
<svg style="left:713px;top:35px" width="12" height="8" viewBox="0 0 12 8"><path d="M2,2.4 L6,5.4 L10,2.4" fill="none" stroke="#fff" stroke-width="1.2" stroke-linecap="round"/></svg>
<span class="t" style="left:741.2px;top:29.6px;line-height:18px;font-size:12.5px;color:#a2a2a2;letter-spacing:-0.149px;">Slice plate</span>
<div class="a" style="left:827px;top:29px;width:19px;height:19px;background:#1a7bf8;border-radius:9.5px 0 0 9.5px"></div>
<div class="a" style="left:847.3px;top:29px;width:128.5px;height:19px;background:#1a7bf8;border-radius:0 9.5px 9.5px 0"></div>
<svg style="left:831px;top:35px" width="12" height="8" viewBox="0 0 12 8"><path d="M2,2.4 L6,5.4 L10,2.4" fill="none" stroke="#fff" stroke-width="1.2" stroke-linecap="round"/></svg>
<span class="t" style="left:859.5px;top:29.6px;line-height:18px;font-size:12.5px;color:#ffffff;letter-spacing:-0.091px;">Export G-code file</span>
<div class="a" style="left:0px;top:53px;width:303px;height:728px;background:#ffffff"></div>
<div class="a" style="left:0px;top:53px;width:303px;height:14px;background:#c9c9c9"></div>
<div class="a" style="left:303px;top:53px;width:1px;height:728px;background:#a2a2a2"></div>
<div class="a" style="left:304px;top:53px;width:3px;height:728px;background:#d4d4d4"></div>
<div class="a" style="left:0px;top:67px;width:303px;height:24px;background:#f5f5f5"></div>
<div class="a" style="left:0px;top:164px;width:303px;height:24px;background:#f5f5f5"></div>
<div class="a" style="left:0px;top:240px;width:303px;height:23px;background:#f5f5f5"></div>
<div class="a" style="left:0px;top:53px;width:1px;height:728px;background:#9c9c9c"></div>
<svg style="left:6px;top:72px" width="14" height="13" viewBox="0 0 14 13"><rect x="1" y="1" width="12" height="11" rx="1" fill="none" stroke="#84898c" stroke-width="1"/><path d="M5,3 H9 V5.4 L7,7 L5,5.4 Z M7,7 V8" fill="none" stroke="#2a7fd6" stroke-width="1"/><path d="M2,10.2 H12" stroke="#2a7fd6" stroke-width="1.4"/></svg>
<span class="t" style="left:24.0px;top:69.6px;line-height:18px;font-size:12.5px;color:#363b3d;letter-spacing:0.029px;">Printer</span>
<svg style="left:283px;top:72px" width="14" height="13" viewBox="0 0 14 13"><path d="M1,3.5 H4 M6.6,3.5 H13 M1,9.5 H8.4 M11,9.5 H13" stroke="#84898c" stroke-width="1"/><rect x="4" y="1.6" width="2.6" height="3.8" rx="1.2" fill="none" stroke="#84898c" stroke-width="1"/><rect x="8.4" y="7.6" width="2.6" height="3.8" rx="1.2" fill="none" stroke="#84898c" stroke-width="1"/></svg>
<div class="a" style="left:10px;top:104px;width:267px;height:20px;background:#fff;border:1px solid #d6d6d6"></div>
<svg style="left:14px;top:111.5px" width="10" height="6" viewBox="0 0 10 6"><path d="M1,1.2 L5,4.4 L9,1.2" fill="none" stroke="#8a8e90" stroke-width="1" stroke-linecap="round"/></svg>
<span class="t" style="left:27.0px;top:106.1px;line-height:17px;font-size:12px;color:#363b3d;letter-spacing:0.065px;">Elegoo Centauri Carbon 2 0.4 nozzle</span>
<svg style="left:280.5px;top:106.5px" width="13" height="13" viewBox="0 0 13 13"><path d="M9,1.5 H2.6 Q1.5,1.5 1.5,2.6 V10.4 Q1.5,11.5 2.6,11.5 H10.4 Q11.5,11.5 11.5,10.4 V5" fill="none" stroke="#84898c" stroke-width="1"/><path d="M4.4,8.8 L5,6.8 L10.6,1.2 L12,2.6 L6.4,8.2 Z" fill="none" stroke="#84898c" stroke-width="0.9" stroke-linejoin="round"/></svg>
<span class="t" style="left:11.0px;top:131.3px;line-height:17px;font-size:12px;color:#262c2e;letter-spacing:0.089px;">Bed type</span>
<div class="a" style="left:63px;top:128px;width:231px;height:24px;background:#f0f0f0;border:1px solid #dedede"></div>
<svg style="left:67px;top:137px" width="10" height="6" viewBox="0 0 10 6"><path d="M1,1.2 L5,4.4 L9,1.2" fill="none" stroke="#9a9a9a" stroke-width="1" stroke-linecap="round"/></svg>
<span class="t" style="left:79.3px;top:131.5px;line-height:17px;font-size:12px;color:#7d7d7d;letter-spacing:0.105px;">Textured Build Plate (Side A)</span>
<svg style="left:6px;top:168px" width="14" height="14" viewBox="0 0 14 14"><path d="M3,1.5 Q0.6,7 3,12.5 M6,1.5 Q3.6,7 6,12.5 M9,1.5 Q6.6,7 9,12.5" fill="none" stroke="#2a7fd6" stroke-width="0.9"/><ellipse cx="11" cy="7" rx="1.6" ry="5.5" fill="none" stroke="#84898c" stroke-width="0.9"/></svg>
<span class="t" style="left:24.0px;top:166.3px;line-height:18px;font-size:12.5px;color:#363b3d;letter-spacing:-0.277px;">Filament</span>
<svg style="left:225px;top:168px" width="15" height="14" viewBox="0 0 15 14"><path d="M2.6,1.2 Q0.2,7 2.6,12.8" fill="none" stroke="#84898c" stroke-width="0.9"/><path d="M4.8,1.2 Q2.4,7 4.8,12.8" fill="none" stroke="#2a7fd6" stroke-width="0.9"/><path d="M7.4,1.2 Q5,7 7.4,12.8" fill="none" stroke="#84898c" stroke-width="0.9" stroke-dasharray="4 3.6 5 0"/><path d="M10.6,4 V10.4 M7.4,7.2 H13.8" stroke="#84898c" stroke-width="1"/></svg>
<svg style="left:261px;top:167px" width="16" height="16" viewBox="0 0 16 16"><path d="M2.5,12.5 V3 Q2.5,1.5 4,1.5 H11 Q12.5,1.5 12.5,3 V5" fill="none" stroke="#84898c" stroke-width="1"/><path d="M4.5,3.8 H10.5" stroke="#2a7fd6" stroke-width="1.4" stroke-dasharray="1.2 0.6"/><path d="M2.5,12.5 H6" stroke="#84898c" stroke-width="1"/><circle cx="11" cy="10.6" r="3.6" fill="none" stroke="#2a7fd6" stroke-width="1.2"/><path d="M9.4,10 H12.6 M9.4,11.6 H12.6" stroke="#2a7fd6" stroke-width="0.9"/></svg>
<svg style="left:283px;top:168px" width="14" height="13" viewBox="0 0 14 13"><path d="M1,3.5 H4 M6.6,3.5 H13 M1,9.5 H8.4 M11,9.5 H13" stroke="#84898c" stroke-width="1"/><rect x="4" y="1.6" width="2.6" height="3.8" rx="1.2" fill="none" stroke="#84898c" stroke-width="1"/><rect x="8.4" y="7.6" width="2.6" height="3.8" rx="1.2" fill="none" stroke="#84898c" stroke-width="1"/></svg>
<div class="a" style="left:10px;top:206px;width:16px;height:16px;background:#fff;border:1px solid #5a5a5a"></div>
<span class="t" style="left:16.0px;top:206.8px;line-height:14px;font-size:10px;color:#363b3d;">1</span>
<div class="a" style="left:30px;top:202px;width:247px;height:24px;background:#fff;border:1px solid #d6d6d6"></div>
<svg style="left:34px;top:211px" width="10" height="6" viewBox="0 0 10 6"><path d="M1,1.2 L5,4.4 L9,1.2" fill="none" stroke="#8a8e90" stroke-width="1" stroke-linecap="round"/></svg>
<span class="t" style="left:46.5px;top:206.7px;line-height:15px;font-size:11px;color:#363b3d;letter-spacing:-0.401px;">Elegoo PLA</span>
<svg style="left:280.5px;top:205.5px" width="13" height="13" viewBox="0 0 13 13"><path d="M9,1.5 H2.6 Q1.5,1.5 1.5,2.6 V10.4 Q1.5,11.5 2.6,11.5 H10.4 Q11.5,11.5 11.5,10.4 V5" fill="none" stroke="#84898c" stroke-width="1"/><path d="M4.4,8.8 L5,6.8 L10.6,1.2 L12,2.6 L6.4,8.2 Z" fill="none" stroke="#84898c" stroke-width="0.9" stroke-linejoin="round"/></svg>
<svg style="left:6px;top:244px" width="14" height="14" viewBox="0 0 14 14"><path d="M7,1.5 L12.6,4.4 L7,7.3 L1.4,4.4 Z" fill="none" stroke="#84898c" stroke-width="1" stroke-linejoin="round"/><path d="M1.4,7.2 L7,10.1 L12.6,7.2" fill="none" stroke="#2a7fd6" stroke-width="1" stroke-linejoin="round"/><path d="M1.4,9.8 L7,12.7 L12.6,9.8" fill="none" stroke="#84898c" stroke-width="1" stroke-linejoin="round"/></svg>
<span class="t" style="left:24.0px;top:241.6px;line-height:18px;font-size:12.5px;color:#363b3d;letter-spacing:-0.693px;">Process</span>
<div class="a" style="left:70px;top:243px;width:80px;height:17px;background:#d9d9d9;border-radius:8.5px"></div>
<div class="a" style="left:70px;top:243px;width:41.5px;height:17px;background:#1a7bf8;border-radius:8.5px"></div>
<span class="t" style="left:77.5px;top:243.9px;line-height:15px;font-size:10.5px;color:#ffffff;transform:scaleX(0.8893);transform-origin:0 50%;">Global</span>
<span class="t" style="left:113.5px;top:243.9px;line-height:15px;font-size:10.5px;color:#7e7e7e;transform:scaleX(0.8986);transform-origin:0 50%;">Objects</span>
<span class="t" style="left:172.0px;top:243.1px;line-height:15px;font-size:10.5px;color:#2c3133;letter-spacing:-0.529px;">Advanced</span>
<div class="a" style="left:221px;top:245px;width:18px;height:13px;background:#0b61c4;border-radius:4px"></div>
<div class="a" style="left:227.5px;top:246.5px;width:10.0px;height:10.0px;background:#cdd6e2;border-radius:3px"></div>
<svg style="left:263px;top:244px" width="14" height="14" viewBox="0 0 14 14"><rect x="1" y="1" width="12" height="12" rx="1" fill="none" stroke="#84898c" stroke-width="1"/><path d="M3,4.2 H4.4 M5.6,4.2 H11 M3,7 H4.4 M5.6,7 H11 M3,9.8 H4.4 M5.6,9.8 H11" stroke="#2a7fd6" stroke-width="1"/></svg>
<span class="t" style="left:284.0px;top:242.6px;line-height:10px;font-size:7px;color:#84898c;">A</span>
<span class="t" style="left:291.5px;top:250.0px;line-height:10px;font-size:7px;color:#84898c;">B</span>
<svg style="left:283px;top:244px" width="14" height="14" viewBox="0 0 14 14"><path d="M8,3.4 H12 M8,3.4 L9.6,1.8 M8,3.4 L9.6,5" stroke="#2a7fd6" stroke-width="1" fill="none"/><path d="M7,10.6 H3 M7,10.6 L5.4,9 M7,10.6 L5.4,12.2" stroke="#2a7fd6" stroke-width="1" fill="none"/></svg>
<div class="a" style="left:27px;top:273px;width:226px;height:20px;background:#fff;border:1px solid #d6d6d6"></div>
<svg style="left:31px;top:280.5px" width="10" height="6" viewBox="0 0 10 6"><path d="M1,1.2 L5,4.4 L9,1.2" fill="none" stroke="#8a8e90" stroke-width="1" stroke-linecap="round"/></svg>
<span class="t" style="left:43.5px;top:274.5px;line-height:17px;font-size:12px;color:#363b3d;letter-spacing:-0.117px;">0.20mm Standard @Elegoo CC2 0.4 ...</span>
<svg style="left:260px;top:276px" width="13" height="13" viewBox="0 0 13 13"><path d="M1.6,1.6 H9 L11.4,4 V11.4 H1.6 Z" fill="none" stroke="#84898c" stroke-width="1" stroke-linejoin="round"/><path d="M4,1.8 V4.6 H8.2 V1.8 M3.6,11.2 V7.6 H9.4 V11.2" fill="none" stroke="#84898c" stroke-width="0.9"/></svg>
<svg style="left:280px;top:276px" width="14" height="14" viewBox="0 0 14 14"><circle cx="6" cy="6" r="4.6" fill="none" stroke="#84898c" stroke-width="1"/><path d="M9.4,9.4 L12.6,12.6" stroke="#84898c" stroke-width="1.1"/></svg>
<span class="t" style="left:13.0px;top:305.0px;line-height:18px;font-size:12.5px;color:#858585;letter-spacing:0.176px;">Strength</span>
<span class="t" style="left:73.0px;top:305.0px;line-height:18px;font-size:12.5px;color:#858585;letter-spacing:-0.539px;">Speed</span>
<span class="t" style="left:117.5px;top:305.0px;line-height:18px;font-size:12.5px;color:#858585;letter-spacing:0.286px;">Support</span>
<span class="t" style="left:174.5px;top:305.0px;line-height:18px;font-size:12.5px;color:#3a3e40;font-weight:700;letter-spacing:-0.342px;">Multimaterial</span>
<span class="t" style="left:259.5px;top:305.0px;line-height:18px;font-size:12.5px;color:#858585;letter-spacing:-0.103px;">Others</span>
<div class="a" style="left:1px;top:325px;width:302px;height:1px;background:#dcdcdc"></div>
<div class="a" style="left:172.5px;top:323.4px;width:77.5px;height:2.2000000000000455px;background:#1a7bf8;border-radius:1px"></div>
<div class="a" style="left:290px;top:326px;width:13px;height:455px;background:#f1f1f1"></div>
<div class="a" style="left:290.5px;top:344px;width:11.5px;height:274px;background:#c8c8c8"></div>
<svg style="left:292px;top:333px" width="9" height="8" viewBox="0 0 9 8"><path d="M1.6,5.6 L4.5,2.6 L7.4,5.6" fill="none" stroke="#505050" stroke-width="1.2"/></svg>
<svg style="left:292px;top:769px" width="9" height="8" viewBox="0 0 9 8"><path d="M1.6,2.4 L4.5,5.4 L7.4,2.4" fill="none" stroke="#505050" stroke-width="1.2"/></svg>
<svg style="left:4px;top:333px" width="16" height="16" viewBox="0 0 16 16"><path d="M5,2 H8 L10,13 H3 Z M4,6 H9 M3.5,9.5 H9.5 M4.2,6 L9.4,9.5 M8.8,6 L3.6,9.5 M5,2.4 L8.6,5.8 M8,2.4 L4.4,5.8" fill="none" stroke="#2a7fd6" stroke-width="0.8"/><path d="M1,14 H14" stroke="#84898c" stroke-width="0.9"/><rect x="11.2" y="2" width="2.6" height="11.4" fill="none" stroke="#84898c" stroke-width="0.9"/></svg>
<span class="t" style="left:23.0px;top:333.3px;line-height:18px;font-size:12.5px;color:#2b3032;font-weight:700;letter-spacing:-0.406px;">Prime tower</span>
<div class="a" style="left:95px;top:342px;width:191px;height:1px;background:#e9e9e9"></div>
<span class="t" style="left:24.0px;top:358.6px;line-height:17px;font-size:12px;color:#40464a;letter-spacing:-0.275px;">Enable</span>
<div class="a" style="left:193px;top:360.6px;width:12px;height:12.0px;background:#0b61c4;border-radius:2px"></div>
<svg style="left:193px;top:360.6px" width="12" height="12" viewBox="0 0 12 12"><path d="M2.8,6 L5.2,8.2 L9.2,3.8" fill="none" stroke="#fff" stroke-width="1.2"/></svg>
<span class="t" style="left:24.0px;top:382.1px;line-height:17px;font-size:12px;color:#40464a;letter-spacing:0.453px;">Width</span>
<div class="a" style="left:193px;top:380.1px;width:93px;height:20.5px;background:#fff;border:1px solid #dcdcdc;border-right:none"></div>
<span class="t" style="left:200.0px;top:382.1px;line-height:17px;font-size:12px;color:#363b3d;">35</span>
<span class="t" style="left:265.0px;top:385.1px;line-height:13px;font-size:9px;color:#6e6e6e;">mm</span>
<span class="t" style="left:24.0px;top:405.6px;line-height:17px;font-size:12px;color:#40464a;letter-spacing:0.058px;">Prime volume</span>
<div class="a" style="left:193px;top:403.6px;width:93px;height:20.5px;background:#fff;border:1px solid #dcdcdc;border-right:none"></div>
<span class="t" style="left:200.0px;top:405.6px;line-height:17px;font-size:12px;color:#363b3d;">45</span>
<span class="t" style="left:262.0px;top:408.6px;line-height:13px;font-size:9px;color:#6e6e6e;">mm³</span>
<span class="t" style="left:24.0px;top:429.1px;line-height:17px;font-size:12px;color:#40464a;letter-spacing:0.387px;">Brim width</span>
<div class="a" style="left:193px;top:427.1px;width:93px;height:20.5px;background:#fff;border:1px solid #dcdcdc;border-right:none"></div>
<span class="t" style="left:200.0px;top:429.1px;line-height:17px;font-size:12px;color:#363b3d;">3</span>
<span class="t" style="left:265.0px;top:432.1px;line-height:13px;font-size:9px;color:#6e6e6e;">mm</span>
<span class="t" style="left:24.0px;top:453.1px;line-height:17px;font-size:12px;color:#40464a;letter-spacing:0.301px;">Wipe tower rotation angle</span>
<div class="a" style="left:193px;top:451.1px;width:93px;height:20.5px;background:#fff;border:1px solid #dcdcdc;border-right:none"></div>
<span class="t" style="left:200.0px;top:453.1px;line-height:17px;font-size:12px;color:#363b3d;">0</span>
<span class="t" style="left:276.4px;top:456.1px;line-height:13px;font-size:9px;color:#6e6e6e;">°</span>
<span class="t" style="left:24.0px;top:476.6px;line-height:17px;font-size:12px;color:#40464a;letter-spacing:0.161px;">Maximal bridging distance</span>
<div class="a" style="left:193px;top:474.6px;width:93px;height:20.5px;background:#fff;border:1px solid #dcdcdc;border-right:none"></div>
<span class="t" style="left:200.0px;top:476.6px;line-height:17px;font-size:12px;color:#363b3d;">10</span>
<span class="t" style="left:265.0px;top:479.6px;line-height:13px;font-size:9px;color:#6e6e6e;">mm</span>
<span class="t" style="left:24.0px;top:499.9px;line-height:17px;font-size:12px;color:#40464a;letter-spacing:0.188px;">Wipe tower purge lines</span>
<span class="t" style="left:24.0px;top:514.1px;line-height:17px;font-size:12px;color:#40464a;letter-spacing:-0.062px;">spacing</span>
<div class="a" style="left:193px;top:505.6px;width:93px;height:20.5px;background:#fff;border:1px solid #dcdcdc;border-right:none"></div>
<span class="t" style="left:200.0px;top:507.6px;line-height:17px;font-size:12px;color:#363b3d;">100</span>
<span class="t" style="left:272.0px;top:510.6px;line-height:13px;font-size:9px;color:#6e6e6e;">%</span>
<span class="t" style="left:24.0px;top:538.1px;line-height:17px;font-size:12px;color:#40464a;letter-spacing:0.291px;">Extra flow for purging</span>
<div class="a" style="left:193px;top:536.1px;width:93px;height:20.5px;background:#fff;border:1px solid #dcdcdc;border-right:none"></div>
<span class="t" style="left:200.0px;top:538.1px;line-height:17px;font-size:12px;color:#363b3d;">100</span>
<span class="t" style="left:272.0px;top:541.1px;line-height:13px;font-size:9px;color:#6e6e6e;">%</span>
<span class="t" style="left:24.0px;top:561.3px;line-height:17px;font-size:12px;color:#40464a;letter-spacing:0.301px;">Maximum wipe tower print</span>
<span class="t" style="left:24.0px;top:575.4px;line-height:17px;font-size:12px;color:#40464a;letter-spacing:-0.301px;">speed</span>
<div class="a" style="left:193px;top:566.6px;width:93px;height:20.5px;background:#fff;border:1px solid #dcdcdc;border-right:none"></div>
<span class="t" style="left:200.0px;top:568.6px;line-height:17px;font-size:12px;color:#363b3d;">90</span>
<span class="t" style="left:258.0px;top:571.6px;line-height:13px;font-size:9px;color:#6e6e6e;">mm/s</span>
<span class="t" style="left:24.0px;top:599.1px;line-height:17px;font-size:12px;color:#40464a;letter-spacing:0.199px;">Wall type</span>
<div class="a" style="left:193px;top:597.1px;width:93px;height:20.5px;background:#fff;border:1px solid #dcdcdc;border-right:none"></div>
<svg style="left:197px;top:605.1px" width="10" height="6" viewBox="0 0 10 6"><path d="M1,1.2 L5,4.4 L9,1.2" fill="none" stroke="#8a8e90" stroke-width="1" stroke-linecap="round"/></svg>
<span class="t" style="left:210.0px;top:599.1px;line-height:17px;font-size:12px;color:#363b3d;letter-spacing:-0.008px;">Rib</span>
<span class="t" style="left:24.0px;top:622.6px;line-height:17px;font-size:12px;color:#40464a;letter-spacing:0.219px;">Extra rib length</span>
<div class="a" style="left:193px;top:620.6px;width:93px;height:20.5px;background:#fff;border:1px solid #dcdcdc;border-right:none"></div>
<span class="t" style="left:200.0px;top:622.6px;line-height:17px;font-size:12px;color:#363b3d;">0</span>
<span class="t" style="left:265.0px;top:625.6px;line-height:13px;font-size:9px;color:#6e6e6e;">mm</span>
<span class="t" style="left:24.0px;top:646.1px;line-height:17px;font-size:12px;color:#40464a;letter-spacing:0.268px;">Rib width</span>
<div class="a" style="left:193px;top:644.1px;width:93px;height:20.5px;background:#fff;border:1px solid #dcdcdc;border-right:none"></div>
<span class="t" style="left:200.0px;top:646.1px;line-height:17px;font-size:12px;color:#363b3d;">8</span>
<span class="t" style="left:265.0px;top:649.1px;line-height:13px;font-size:9px;color:#6e6e6e;">mm</span>
<span class="t" style="left:24.0px;top:669.6px;line-height:17px;font-size:12px;color:#40464a;letter-spacing:0.166px;">Fillet wall</span>
<div class="a" style="left:193px;top:671.6px;width:12px;height:12.0px;background:#0b61c4;border-radius:2px"></div>
<svg style="left:193px;top:671.6px" width="12" height="12" viewBox="0 0 12 12"><path d="M2.8,6 L5.2,8.2 L9.2,3.8" fill="none" stroke="#fff" stroke-width="1.2"/></svg>
<span class="t" style="left:24.0px;top:693.1px;line-height:17px;font-size:12px;color:#40464a;letter-spacing:-0.010px;">No sparse layers (beta)</span>
<div class="a" style="left:193px;top:695.1px;width:12px;height:12.0px;background:#fff;border:1px solid #dadada;border-radius:2px"></div>
<svg style="left:4px;top:720px" width="16" height="16" viewBox="0 0 16 16"><rect x="1.5" y="2" width="3.6" height="12" rx="1" fill="none" stroke="#84898c" stroke-width="0.9"/><path d="M6.5,13 L13,3 M8,9 L13.5,8 M7.4,11 L12,13 M9.6,6.4 L9,2.4 M11,5 L14,4.6" stroke="#2a7fd6" stroke-width="0.9" fill="none"/></svg>
<span class="t" style="left:23.0px;top:719.8px;line-height:18px;font-size:12.5px;color:#2b3032;font-weight:700;letter-spacing:-0.546px;">Ooze prevention</span>
<div class="a" style="left:118px;top:729px;width:168px;height:1px;background:#e9e9e9"></div>
<span class="t" style="left:24.0px;top:745.5px;line-height:17px;font-size:12px;color:#40464a;letter-spacing:-0.275px;">Enable</span>
<div class="a" style="left:193px;top:747.5px;width:12px;height:12.0px;background:#ececec;border:1px solid #dadada;border-radius:2px"></div>
<svg style="left:4px;top:773.5px" width="16" height="12" viewBox="0 0 16 12"><path d="M3,2 V5 M1.5,3.5 H4.5 M7,1 V3 M6,2 H8" stroke="#2a7fd6" stroke-width="0.8"/><rect x="11" y="1" width="2.6" height="11" fill="none" stroke="#84898c" stroke-width="0.9"/></svg>
<span class="t" style="left:23.0px;top:772.0px;line-height:18px;font-size:12.5px;color:#2b3032;font-weight:700;letter-spacing:-0.661px;">Flush options</span>
<div class="a" style="left:307px;top:53px;width:18px;height:18px;background:#f8f8f8"></div>
<svg style="left:310px;top:57px" width="12" height="10" viewBox="0 0 12 10"><path d="M4.6,1.4 L2,3.6 L4.6,5.8 M7.4,4.2 L10,6.4 L7.4,8.6" fill="none" stroke="#5a5f61" stroke-width="1.1" stroke-linecap="round" stroke-linejoin="round"/></svg>
<div class="a" style="left:311px;top:75px;width:99px;height:98px;background:#f1f1f1;border-radius:9px"></div>
<div class="a" style="left:317px;top:80.5px;width:87.5px;height:87.0px;background:#ececec;border:2px solid #1b7fc6;border-radius:5px"></div>
<span class="t" style="left:325.5px;top:86.0px;line-height:15px;font-size:11px;color:#666666;">1</span>
<svg style="left:0;top:0" width="1000" height="200" viewBox="0 0 1000 200"><polygon points="364.6,93.7 355.8,93.7 355.8,121.2 364.6,121.2" fill="#7b7b7b" stroke="#7b7b7b" stroke-width="0.3"/>
<polygon points="364.6,93.7 360.2,97.1 360.2,124.6 364.6,121.2" fill="#747474" stroke="#747474" stroke-width="0.3"/>
<polygon points="355.8,93.7 360.2,97.1 360.2,124.6 355.8,121.2" fill="#7d7d7d" stroke="#7d7d7d" stroke-width="0.3"/>
<polygon points="375.8,97.3 368.3,94.3 368.3,121.9 375.8,124.8" fill="#7d7d7d" stroke="#7d7d7d" stroke-width="0.3"/>
<polygon points="352.1,94.3 344.6,97.3 344.6,124.8 352.1,121.9" fill="#777777" stroke="#777777" stroke-width="0.3"/>
<polygon points="368.3,94.3 369.6,98.8 369.6,126.3 368.3,121.9" fill="#7c7c7c" stroke="#7c7c7c" stroke-width="0.3"/>
<polygon points="352.1,94.3 350.8,98.8 350.8,126.3 352.1,121.9" fill="#747474" stroke="#747474" stroke-width="0.3"/>
<polygon points="363.5,97.2 360.2,97.1 360.2,124.6 363.5,124.8" fill="#808080" stroke="#808080" stroke-width="0.3"/>
<polygon points="360.2,97.1 356.9,97.2 356.9,124.8 360.2,124.6" fill="#767676" stroke="#767676" stroke-width="0.3"/>
<polygon points="366.6,97.8 363.5,97.2 363.5,124.8 366.6,125.3" fill="#787878" stroke="#787878" stroke-width="0.3"/>
<polygon points="356.9,97.2 353.8,97.8 353.8,125.3 356.9,124.8" fill="#7d7d7d" stroke="#7d7d7d" stroke-width="0.3"/>
<polygon points="375.8,97.3 369.6,98.8 369.6,126.3 375.8,124.8" fill="#797979" stroke="#797979" stroke-width="0.3"/>
<polygon points="344.6,97.3 350.8,98.8 350.8,126.3 344.6,124.8" fill="#7d7d7d" stroke="#7d7d7d" stroke-width="0.3"/>
<polygon points="369.6,98.8 366.6,97.8 366.6,125.3 369.6,126.3" fill="#818181" stroke="#818181" stroke-width="0.3"/>
<polygon points="353.8,97.8 350.8,98.8 350.8,126.3 353.8,125.3" fill="#747474" stroke="#747474" stroke-width="0.3"/>
<polygon points="372.2,100.0 369.6,98.8 369.6,126.3 372.2,127.5" fill="#797979" stroke="#797979" stroke-width="0.3"/>
<polygon points="350.8,98.8 348.2,100.0 348.2,127.5 350.8,126.3" fill="#7a7a7a" stroke="#7a7a7a" stroke-width="0.3"/>
<polygon points="374.6,101.6 372.2,100.0 372.2,127.5 374.6,129.1" fill="#818181" stroke="#818181" stroke-width="0.3"/>
<polygon points="348.2,100.0 345.8,101.6 345.8,129.1 348.2,127.5" fill="#707070" stroke="#707070" stroke-width="0.3"/>
<polygon points="378.6,99.2 376.4,103.4 376.4,130.9 378.6,126.7" fill="#848484" stroke="#848484" stroke-width="0.3"/>
<polygon points="341.8,99.2 344.0,103.4 344.0,130.9 341.8,126.7" fill="#8d8d8d" stroke="#8d8d8d" stroke-width="0.3"/>
<polygon points="382.9,104.3 378.6,99.2 378.6,126.7 382.9,131.8" fill="#7d7d7d" stroke="#7d7d7d" stroke-width="0.3"/>
<polygon points="341.8,99.2 337.5,104.3 337.5,131.8 341.8,126.7" fill="#747474" stroke="#747474" stroke-width="0.3"/>
<polygon points="376.4,103.4 374.6,101.6 374.6,129.1 376.4,130.9" fill="#797979" stroke="#797979" stroke-width="0.3"/>
<polygon points="345.8,101.6 344.0,103.4 344.0,130.9 345.8,129.1" fill="#787878" stroke="#787878" stroke-width="0.3"/>
<polygon points="382.9,104.3 376.4,103.4 376.4,130.9 382.9,131.8" fill="#7c7c7c" stroke="#7c7c7c" stroke-width="0.3"/>
<polygon points="337.5,104.3 344.0,103.4 344.0,130.9 337.5,131.8" fill="#7a7a7a" stroke="#7a7a7a" stroke-width="0.3"/>
<polygon points="377.8,105.4 376.4,103.4 376.4,130.9 377.8,132.9" fill="#818181" stroke="#818181" stroke-width="0.3"/>
<polygon points="344.0,103.4 342.6,105.4 342.6,132.9 344.0,130.9" fill="#707070" stroke="#707070" stroke-width="0.3"/>
<polygon points="378.6,107.6 377.8,105.4 377.8,132.9 378.6,135.1" fill="#787878" stroke="#787878" stroke-width="0.3"/>
<polygon points="342.6,105.4 341.8,107.6 341.8,135.1 342.6,132.9" fill="#787878" stroke="#787878" stroke-width="0.3"/>
<polygon points="383.9,106.8 378.9,109.8 378.9,137.3 383.9,134.3" fill="#858585" stroke="#858585" stroke-width="0.3"/>
<polygon points="336.5,106.8 341.5,109.8 341.5,137.3 336.5,134.3" fill="#8f8f8f" stroke="#8f8f8f" stroke-width="0.3"/>
<polygon points="378.9,109.8 378.6,107.6 378.6,135.1 378.9,137.3" fill="#7f7f7f" stroke="#7f7f7f" stroke-width="0.3"/>
<polygon points="341.8,107.6 341.5,109.8 341.5,137.3 341.8,135.1" fill="#707070" stroke="#707070" stroke-width="0.3"/>
<polygon points="383.9,112.8 383.9,106.8 383.9,134.3 383.9,140.3" fill="#7a7a7a" stroke="#7a7a7a" stroke-width="0.3"/>
<polygon points="336.5,106.8 336.5,112.8 336.5,140.3 336.5,134.3" fill="#747474" stroke="#747474" stroke-width="0.3"/>
<polygon points="378.6,112.0 378.9,109.8 378.9,137.3 378.6,139.5" fill="#808080" stroke="#808080" stroke-width="0.3"/>
<polygon points="341.5,109.8 341.8,112.0 341.8,139.5 341.5,137.3" fill="#888888" stroke="#888888" stroke-width="0.3"/>
<polygon points="383.9,112.8 378.9,109.8 378.9,137.3 383.9,140.3" fill="#7d7d7d" stroke="#7d7d7d" stroke-width="0.3"/>
<polygon points="336.5,112.8 341.5,109.8 341.5,137.3 336.5,140.3" fill="#757575" stroke="#757575" stroke-width="0.3"/>
<polygon points="377.8,114.1 378.6,112.0 378.6,139.5 377.8,141.7" fill="#808080" stroke="#808080" stroke-width="0.3"/>
<polygon points="341.8,112.0 342.6,114.1 342.6,141.7 341.8,139.5" fill="#898989" stroke="#898989" stroke-width="0.3"/>
<polygon points="376.4,116.2 377.8,114.1 377.8,141.7 376.4,143.7" fill="#808080" stroke="#808080" stroke-width="0.3"/>
<polygon points="342.6,114.1 344.0,116.2 344.0,143.7 342.6,141.7" fill="#8a8a8a" stroke="#8a8a8a" stroke-width="0.3"/>
<polygon points="382.9,115.3 376.4,116.2 376.4,143.7 382.9,142.8" fill="#8a8a8a" stroke="#8a8a8a" stroke-width="0.3"/>
<polygon points="337.5,115.3 344.0,116.2 344.0,143.7 337.5,142.8" fill="#8d8d8d" stroke="#8d8d8d" stroke-width="0.3"/>
<polygon points="374.6,118.0 376.4,116.2 376.4,143.7 374.6,145.5" fill="#808080" stroke="#808080" stroke-width="0.3"/>
<polygon points="344.0,116.2 345.8,118.0 345.8,145.5 344.0,143.7" fill="#8a8a8a" stroke="#8a8a8a" stroke-width="0.3"/>
<polygon points="378.6,120.4 382.9,115.3 382.9,142.8 378.6,147.9" fill="#868686" stroke="#868686" stroke-width="0.3"/>
<polygon points="337.5,115.3 341.8,120.4 341.8,147.9 337.5,142.8" fill="#909090" stroke="#909090" stroke-width="0.3"/>
<polygon points="378.6,120.4 376.4,116.2 376.4,143.7 378.6,147.9" fill="#7c7c7c" stroke="#7c7c7c" stroke-width="0.3"/>
<polygon points="341.8,120.4 344.0,116.2 344.0,143.7 341.8,147.9" fill="#747474" stroke="#747474" stroke-width="0.3"/>
<polygon points="372.2,119.5 374.6,118.0 374.6,145.5 372.2,147.1" fill="#818181" stroke="#818181" stroke-width="0.3"/>
<polygon points="345.8,118.0 348.2,119.5 348.2,147.1 345.8,145.5" fill="#8b8b8b" stroke="#8b8b8b" stroke-width="0.3"/>
<polygon points="369.6,120.8 372.2,119.5 372.2,147.1 369.6,148.3" fill="#828282" stroke="#828282" stroke-width="0.3"/>
<polygon points="348.2,119.5 350.8,120.8 350.8,148.3 348.2,147.1" fill="#8b8b8b" stroke="#8b8b8b" stroke-width="0.3"/>
<polygon points="366.6,121.8 369.6,120.8 369.6,148.3 366.6,149.3" fill="#848484" stroke="#848484" stroke-width="0.3"/>
<polygon points="350.8,120.8 353.8,121.8 353.8,149.3 350.8,148.3" fill="#8a8a8a" stroke="#8a8a8a" stroke-width="0.3"/>
<polygon points="375.8,122.3 369.6,120.8 369.6,148.3 375.8,149.8" fill="#8e8e8e" stroke="#8e8e8e" stroke-width="0.3"/>
<polygon points="344.6,122.3 350.8,120.8 350.8,148.3 344.6,149.8" fill="#898989" stroke="#898989" stroke-width="0.3"/>
<polygon points="363.5,122.3 366.6,121.8 366.6,149.3 363.5,149.8" fill="#868686" stroke="#868686" stroke-width="0.3"/>
<polygon points="353.8,121.8 356.9,122.3 356.9,149.8 353.8,149.3" fill="#8a8a8a" stroke="#8a8a8a" stroke-width="0.3"/>
<polygon points="360.2,122.5 363.5,122.3 363.5,149.8 360.2,150.0" fill="#878787" stroke="#878787" stroke-width="0.3"/>
<polygon points="356.9,122.3 360.2,122.5 360.2,150.0 356.9,149.8" fill="#898989" stroke="#898989" stroke-width="0.3"/>
<polygon points="368.3,125.2 369.6,120.8 369.6,148.3 368.3,152.7" fill="#848484" stroke="#848484" stroke-width="0.3"/>
<polygon points="352.1,125.2 350.8,120.8 350.8,148.3 352.1,152.7" fill="#8d8d8d" stroke="#8d8d8d" stroke-width="0.3"/>
<polygon points="368.3,125.2 375.8,122.3 375.8,149.8 368.3,152.7" fill="#898989" stroke="#898989" stroke-width="0.3"/>
<polygon points="344.6,122.3 352.1,125.2 352.1,152.7 344.6,149.8" fill="#919191" stroke="#919191" stroke-width="0.3"/>
<polygon points="364.6,125.9 360.2,122.5 360.2,150.0 364.6,153.4" fill="#8f8f8f" stroke="#8f8f8f" stroke-width="0.3"/>
<polygon points="355.8,125.9 360.2,122.5 360.2,150.0 355.8,153.4" fill="#848484" stroke="#848484" stroke-width="0.3"/>
<polygon points="355.8,125.9 364.6,125.9 364.6,153.4 355.8,153.4" fill="#8e8e8e" stroke="#8e8e8e" stroke-width="0.3"/>
<path d="M383.9,112.8 L383.9,106.8 L378.9,109.8 Z M382.9,104.3 L378.6,99.2 L376.4,103.4 Z M375.8,97.3 L368.3,94.3 L369.6,98.8 Z M364.6,93.7 L355.8,93.7 L360.2,97.1 Z M352.1,94.3 L344.6,97.3 L350.8,98.8 Z M341.8,99.2 L337.5,104.3 L344.0,103.4 Z M336.5,106.8 L336.5,112.8 L341.5,109.8 Z M337.5,115.3 L341.8,120.4 L344.0,116.2 Z M344.6,122.3 L352.1,125.2 L350.8,120.8 Z M355.8,125.9 L364.6,125.9 L360.2,122.5 Z M368.3,125.2 L375.8,122.3 L369.6,120.8 Z M378.6,120.4 L382.9,115.3 L376.4,116.2 Z " fill="none" stroke="#e2e2e2" stroke-width="0.8" stroke-linejoin="round"/></svg>
<span class="t" style="left:306.2px;top:173.1px;line-height:21px;font-size:15px;color:#f0713a;font-weight:700;font-style:italic;transform:scaleX(1.6722);transform-origin:0 50%;-webkit-text-stroke:0.4px #f0713a;">tled</span>
<div class="a" style="left:727.5px;top:55.5px;width:219.0px;height:284.5px;background:rgba(26,26,26,0.80);border-radius:6px"></div>
<svg style="left:735px;top:64px" width="14" height="13" viewBox="0 0 14 13"><path d="M1.6,5.6 L7,2 L12.4,5.6 M1.6,10.8 L7,7.2 L12.4,10.8" fill="none" stroke="#e9e9e9" stroke-width="1.1" stroke-linecap="round" stroke-linejoin="round"/></svg>
<svg style="left:756px;top:64px" width="16" height="13" viewBox="0 0 16 13"><path d="M4.4,3 L1.8,6.5 L4.4,10 M11.6,3 L14.2,6.5 L11.6,10 M9.2,1.4 L6.8,11.6" fill="none" stroke="#e9e9e9" stroke-width="1" stroke-linecap="round" stroke-linejoin="round"/></svg>
<div class="a" style="left:780px;top:63px;width:154px;height:15px;background:#2a2a2a;border-radius:3px"></div>
<svg style="left:783px;top:67.5px" width="10" height="7" viewBox="0 0 10 7"><path d="M1,1.6 Q5,5.8 9,1.6" fill="none" stroke="#e9e9e9" stroke-width="1.1" stroke-linecap="round"/></svg>
<span class="t" style="left:798.8px;top:62.5px;line-height:15px;font-size:10.8px;color:#e9e9e9;letter-spacing:-0.258px;">Filament</span>
<span class="t" style="left:737.0px;top:87.0px;line-height:15px;font-size:10.5px;color:#f2f2f2;font-weight:700;letter-spacing:-0.255px;">Filament</span>
<span class="t" style="left:788.9px;top:87.0px;line-height:15px;font-size:10.5px;color:#f2f2f2;font-weight:700;letter-spacing:-0.211px;">Model</span>
<span class="t" style="left:835.5px;top:87.0px;line-height:15px;font-size:10.5px;color:#f2f2f2;font-weight:700;letter-spacing:-0.628px;">Flushed</span>
<span class="t" style="left:881.5px;top:87.0px;line-height:15px;font-size:10.5px;color:#f2f2f2;font-weight:700;letter-spacing:0.047px;">Total</span>
<div class="a" style="left:727.5px;top:103px;width:219.0px;height:1px;background:#a4a4a4"></div>
<div class="a" style="left:737.5px;top:108.3px;width:7.2999999999999545px;height:7.299999999999997px;background:#ffffff"></div>
<span class="t" style="left:751.6px;top:104.7px;line-height:15px;font-size:10.5px;color:#e9e9e9;">1</span>
<span class="t" style="left:789.2px;top:104.7px;line-height:15px;font-size:10.5px;color:#e9e9e9;letter-spacing:-0.376px;">13.50 m</span>
<span class="t" style="left:789.2px;top:116.7px;line-height:15px;font-size:10.5px;color:#e9e9e9;letter-spacing:-0.291px;">40.60 g</span>
<span class="t" style="left:835.3px;top:104.7px;line-height:15px;font-size:10.5px;color:#e9e9e9;letter-spacing:-0.442px;">0.16 m</span>
<span class="t" style="left:835.3px;top:116.7px;line-height:15px;font-size:10.5px;color:#e9e9e9;letter-spacing:-0.301px;">0.47 g</span>
<span class="t" style="left:881.7px;top:104.7px;line-height:15px;font-size:10.5px;color:#e9e9e9;letter-spacing:-0.309px;">13.66 m</span>
<span class="t" style="left:881.7px;top:116.7px;line-height:15px;font-size:10.5px;color:#e9e9e9;letter-spacing:-0.291px;">41.06 g</span>
<svg style="left:924.5px;top:106px" width="14" height="12" viewBox="0 0 14 12"><path d="M1.2,6 C3,1.4 10.6,1.4 12.4,6 C10.6,10.6 3,10.6 1.2,6 Z" fill="none" stroke="#1a7bf8" stroke-width="1.3"/><circle cx="6.8" cy="6" r="2.6" fill="#1a7bf8"/></svg>
<span class="t" style="left:737.0px;top:133.1px;line-height:15px;font-size:10.5px;color:#e9e9e9;letter-spacing:-0.170px;">Filament change times:</span>
<span class="t" style="left:850.0px;top:133.1px;line-height:15px;font-size:10.5px;color:#e9e9e9;letter-spacing:-0.444px;">0</span>
<span class="t" style="left:737.0px;top:147.7px;line-height:15px;font-size:10.5px;color:#e9e9e9;letter-spacing:-0.279px;">Cost:</span>
<span class="t" style="left:766.5px;top:147.7px;line-height:15px;font-size:10.5px;color:#e9e9e9;letter-spacing:-0.312px;">0.00</span>
<span class="t" style="left:737.0px;top:169.7px;line-height:15px;font-size:10.5px;color:#f2f2f2;font-weight:700;letter-spacing:-0.330px;">Time Estimation</span>
<div class="a" style="left:727.5px;top:186px;width:219.0px;height:1px;background:#a4a4a4"></div>
<span class="t" style="left:737.0px;top:188.1px;line-height:15px;font-size:10.5px;color:#e9e9e9;letter-spacing:-0.136px;">Prepare time:</span>
<span class="t" style="left:834.3px;top:188.1px;line-height:15px;font-size:10.5px;color:#e9e9e9;letter-spacing:-0.994px;">4s</span>
<span class="t" style="left:737.0px;top:203.0px;line-height:15px;font-size:10.5px;color:#e9e9e9;letter-spacing:0.041px;">Model printing time:</span>
<span class="t" style="left:834.6px;top:203.0px;line-height:15px;font-size:10.5px;color:#e9e9e9;letter-spacing:0.018px;">1h11m</span>
<span class="t" style="left:737.0px;top:217.9px;line-height:15px;font-size:10.5px;color:#e9e9e9;letter-spacing:0.054px;">Total time:</span>
<span class="t" style="left:834.6px;top:217.9px;line-height:15px;font-size:10.5px;color:#e9e9e9;letter-spacing:0.018px;">1h11m</span>
<span class="t" style="left:737.0px;top:236.1px;line-height:15px;font-size:10.5px;color:#f2f2f2;font-weight:700;letter-spacing:-0.279px;">Options</span>
<div class="a" style="left:727.5px;top:251.5px;width:219.0px;height:1.0px;background:#a4a4a4"></div>
<div class="a" style="left:737.5px;top:257.4px;width:7.2999999999999545px;height:7.2000000000000455px;background:#3b4ca8"></div>
<span class="t" style="left:751.0px;top:253.5px;line-height:15px;font-size:10.5px;color:#e9e9e9;letter-spacing:-0.079px;">Travel</span>
<svg style="left:924.5px;top:255px" width="14" height="12" viewBox="0 0 14 12"><path d="M1.4,6 C3.2,1.8 10.8,1.8 12.6,6 C10.8,10.2 3.2,10.2 1.4,6 Z" fill="none" stroke="#8a8a8a" stroke-width="0.9"/><circle cx="7" cy="6" r="2.3" fill="none" stroke="#8a8a8a" stroke-width="0.9"/><path d="M2.4,0.8 L11.8,11.4" stroke="#8a8a8a" stroke-width="0.9"/></svg>
<div class="a" style="left:737.5px;top:274.0px;width:7.2999999999999545px;height:7.2000000000000455px;background:#cf2ccf"></div>
<span class="t" style="left:751.0px;top:270.1px;line-height:15px;font-size:10.5px;color:#e9e9e9;letter-spacing:-0.107px;">Retract</span>
<svg style="left:924.5px;top:271.6px" width="14" height="12" viewBox="0 0 14 12"><path d="M1.4,6 C3.2,1.8 10.8,1.8 12.6,6 C10.8,10.2 3.2,10.2 1.4,6 Z" fill="none" stroke="#8a8a8a" stroke-width="0.9"/><circle cx="7" cy="6" r="2.3" fill="none" stroke="#8a8a8a" stroke-width="0.9"/><path d="M2.4,0.8 L11.8,11.4" stroke="#8a8a8a" stroke-width="0.9"/></svg>
<div class="a" style="left:737.5px;top:290.59999999999997px;width:7.2999999999999545px;height:7.2000000000000455px;background:#3fa6d6"></div>
<span class="t" style="left:751.0px;top:286.7px;line-height:15px;font-size:10.5px;color:#e9e9e9;letter-spacing:0.102px;">Unretract</span>
<svg style="left:924.5px;top:288.2px" width="14" height="12" viewBox="0 0 14 12"><path d="M1.4,6 C3.2,1.8 10.8,1.8 12.6,6 C10.8,10.2 3.2,10.2 1.4,6 Z" fill="none" stroke="#8a8a8a" stroke-width="0.9"/><circle cx="7" cy="6" r="2.3" fill="none" stroke="#8a8a8a" stroke-width="0.9"/><path d="M2.4,0.8 L11.8,11.4" stroke="#8a8a8a" stroke-width="0.9"/></svg>
<div class="a" style="left:737.5px;top:307.09999999999997px;width:7.2999999999999545px;height:7.2000000000000455px;background:#ffff00"></div>
<span class="t" style="left:751.0px;top:303.2px;line-height:15px;font-size:10.5px;color:#e9e9e9;letter-spacing:0.021px;">Wipe</span>
<svg style="left:924.5px;top:304.7px" width="14" height="12" viewBox="0 0 14 12"><path d="M1.4,6 C3.2,1.8 10.8,1.8 12.6,6 C10.8,10.2 3.2,10.2 1.4,6 Z" fill="none" stroke="#8a8a8a" stroke-width="0.9"/><circle cx="7" cy="6" r="2.3" fill="none" stroke="#8a8a8a" stroke-width="0.9"/><path d="M2.4,0.8 L11.8,11.4" stroke="#8a8a8a" stroke-width="0.9"/></svg>
<div class="a" style="left:737.5px;top:323.59999999999997px;width:7.2999999999999545px;height:7.2000000000000455px;background:#e8e8e8"></div>
<span class="t" style="left:751.0px;top:319.7px;line-height:15px;font-size:10.5px;color:#e9e9e9;letter-spacing:-0.547px;">Seams</span>
<svg style="left:924.5px;top:321.2px" width="14" height="12" viewBox="0 0 14 12"><path d="M1.4,6 C3.2,1.8 10.8,1.8 12.6,6 C10.8,10.2 3.2,10.2 1.4,6 Z" fill="none" stroke="#8a8a8a" stroke-width="0.9"/><circle cx="7" cy="6" r="2.3" fill="none" stroke="#8a8a8a" stroke-width="0.9"/><path d="M2.4,0.8 L11.8,11.4" stroke="#8a8a8a" stroke-width="0.9"/></svg>
<div class="a" style="left:750.5px;top:344px;width:196.0px;height:379.5px;background:rgba(26,26,26,0.80);border-radius:6px"></div>
<span class="t" style="left:755.8px;top:355.6px;line-height:14px;font-size:10px;color:#d8834a;letter-spacing:0.125px;">467682</span>
<span class="t" style="left:796.6px;top:355.6px;line-height:14px;font-size:10px;color:#bcbc18;transform:scaleX(0.8843);transform-origin:0 50%;">G1</span>
<span class="t" style="left:813.0px;top:355.6px;line-height:14px;font-size:10px;color:#dcdcdc;letter-spacing:-0.011px;">X91.768 Y131.935 E.33728</span>
<span class="t" style="left:755.8px;top:370.5px;line-height:14px;font-size:10px;color:#d8834a;letter-spacing:0.125px;">467683</span>
<span class="t" style="left:796.6px;top:370.5px;line-height:14px;font-size:10px;color:#bcbc18;transform:scaleX(0.8843);transform-origin:0 50%;">G1</span>
<span class="t" style="left:813.0px;top:370.5px;line-height:14px;font-size:10px;color:#dcdcdc;letter-spacing:-0.011px;">X91.793 Y132.179 E.00751</span>
<span class="t" style="left:755.8px;top:385.5px;line-height:14px;font-size:10px;color:#d8834a;letter-spacing:0.125px;">467684</span>
<span class="t" style="left:796.6px;top:385.5px;line-height:14px;font-size:10px;color:#bcbc18;transform:scaleX(0.8843);transform-origin:0 50%;">G1</span>
<span class="t" style="left:813.0px;top:385.5px;line-height:14px;font-size:10px;color:#dcdcdc;letter-spacing:-0.011px;">X91.886 Y132.401 E.00741</span>
<span class="t" style="left:755.8px;top:400.4px;line-height:14px;font-size:10px;color:#d8834a;letter-spacing:0.125px;">467685</span>
<span class="t" style="left:796.6px;top:400.4px;line-height:14px;font-size:10px;color:#bcbc18;transform:scaleX(0.8843);transform-origin:0 50%;">G1</span>
<span class="t" style="left:813.0px;top:400.4px;line-height:14px;font-size:10px;color:#dcdcdc;letter-spacing:-0.011px;">X91.965 Y132.534 E.00474</span>
<span class="t" style="left:755.8px;top:415.3px;line-height:14px;font-size:10px;color:#d8834a;letter-spacing:0.125px;">467686</span>
<span class="t" style="left:796.6px;top:415.3px;line-height:14px;font-size:10px;color:#bcbc18;transform:scaleX(0.8843);transform-origin:0 50%;">G1</span>
<span class="t" style="left:813.0px;top:415.3px;line-height:14px;font-size:10px;color:#dcdcdc;letter-spacing:-0.011px;">X92.08 Y132.638 E.00474</span>
<span class="t" style="left:755.8px;top:430.2px;line-height:14px;font-size:10px;color:#d8834a;letter-spacing:0.125px;">467687</span>
<span class="t" style="left:796.6px;top:430.2px;line-height:14px;font-size:10px;color:#bcbc18;transform:scaleX(0.8843);transform-origin:0 50%;">G1</span>
<span class="t" style="left:813.0px;top:430.2px;line-height:14px;font-size:10px;color:#dcdcdc;letter-spacing:-0.011px;">X92.295 Y132.783 E.00797</span>
<span class="t" style="left:755.8px;top:445.2px;line-height:14px;font-size:10px;color:#d8834a;letter-spacing:0.125px;">467688</span>
<span class="t" style="left:796.6px;top:445.2px;line-height:14px;font-size:10px;color:#bcbc18;transform:scaleX(0.8843);transform-origin:0 50%;">G1</span>
<span class="t" style="left:813.0px;top:445.2px;line-height:14px;font-size:10px;color:#dcdcdc;letter-spacing:-0.011px;">X92.489 Y132.839 E.00618</span>
<span class="t" style="left:755.8px;top:460.1px;line-height:14px;font-size:10px;color:#d8834a;letter-spacing:0.125px;">467689</span>
<span class="t" style="left:796.6px;top:460.1px;line-height:14px;font-size:10px;color:#bcbc18;transform:scaleX(0.8843);transform-origin:0 50%;">G1</span>
<span class="t" style="left:813.0px;top:460.1px;line-height:14px;font-size:10px;color:#dcdcdc;letter-spacing:-0.011px;">X92.796 Y132.857 E.00944</span>
<span class="t" style="left:755.8px;top:475.0px;line-height:14px;font-size:10px;color:#d8834a;letter-spacing:0.125px;">467690</span>
<span class="t" style="left:796.6px;top:475.0px;line-height:14px;font-size:10px;color:#bcbc18;transform:scaleX(0.8843);transform-origin:0 50%;">G1</span>
<span class="t" style="left:813.0px;top:475.0px;line-height:14px;font-size:10px;color:#dcdcdc;letter-spacing:-0.011px;">X93.131 Y132.728 E.01102</span>
<span class="t" style="left:755.8px;top:490.0px;line-height:14px;font-size:10px;color:#d8834a;letter-spacing:0.125px;">467691</span>
<span class="t" style="left:796.6px;top:490.0px;line-height:14px;font-size:10px;color:#bcbc18;transform:scaleX(0.8843);transform-origin:0 50%;">G1</span>
<span class="t" style="left:813.0px;top:490.0px;line-height:14px;font-size:10px;color:#dcdcdc;letter-spacing:-0.011px;">X98.374 Y128.689 E.20305</span>
<span class="t" style="left:755.8px;top:504.9px;line-height:14px;font-size:10px;color:#d8834a;letter-spacing:0.125px;">467692</span>
<span class="t" style="left:796.6px;top:504.9px;line-height:14px;font-size:10px;color:#bcbc18;transform:scaleX(0.8843);transform-origin:0 50%;">G1</span>
<span class="t" style="left:813.0px;top:504.9px;line-height:14px;font-size:10px;color:#dcdcdc;letter-spacing:-0.011px;">X98.572 Y128.557 E.0073</span>
<span class="t" style="left:755.8px;top:519.8px;line-height:14px;font-size:10px;color:#d8834a;letter-spacing:0.125px;">467693</span>
<span class="t" style="left:796.6px;top:519.8px;line-height:14px;font-size:10px;color:#bcbc18;transform:scaleX(0.8843);transform-origin:0 50%;">G1</span>
<span class="t" style="left:813.0px;top:519.8px;line-height:14px;font-size:10px;color:#dcdcdc;letter-spacing:-0.011px;">X98.904 Y128.451 E.01069</span>
<span class="t" style="left:755.8px;top:534.8px;line-height:14px;font-size:10px;color:#d8834a;letter-spacing:0.125px;">467694</span>
<span class="t" style="left:796.6px;top:534.8px;line-height:14px;font-size:10px;color:#bcbc18;transform:scaleX(0.8843);transform-origin:0 50%;">G1</span>
<span class="t" style="left:813.0px;top:534.8px;line-height:14px;font-size:10px;color:#dcdcdc;letter-spacing:-0.011px;">X98.949 Y128.451 E.00138</span>
<span class="t" style="left:755.8px;top:549.7px;line-height:14px;font-size:10px;color:#d8834a;letter-spacing:0.125px;">467695</span>
<span class="t" style="left:796.6px;top:549.7px;line-height:14px;font-size:10px;color:#bcbc18;transform:scaleX(0.8843);transform-origin:0 50%;">G1</span>
<span class="t" style="left:813.0px;top:549.7px;line-height:14px;font-size:10px;color:#dcdcdc;letter-spacing:-0.011px;">E-.728 F1800</span>
<span class="t" style="left:755.8px;top:564.6px;line-height:14px;font-size:10px;color:#d8834a;letter-spacing:0.125px;">467696</span>
<span class="t" style="left:796.6px;top:564.6px;line-height:14px;font-size:10px;color:#8e8e8e;letter-spacing:-0.507px;">;WIPE_START</span>
<span class="t" style="left:755.8px;top:579.5px;line-height:14px;font-size:10px;color:#d8834a;letter-spacing:0.125px;">467697</span>
<span class="t" style="left:796.6px;top:579.5px;line-height:14px;font-size:10px;color:#bcbc18;transform:scaleX(0.8843);transform-origin:0 50%;">G1</span>
<span class="t" style="left:813.0px;top:579.5px;line-height:14px;font-size:10px;color:#dcdcdc;letter-spacing:-0.014px;">F30000</span>
<span class="t" style="left:755.8px;top:594.5px;line-height:14px;font-size:10px;color:#d8834a;letter-spacing:0.125px;">467698</span>
<span class="t" style="left:796.6px;top:594.5px;line-height:14px;font-size:10px;color:#bcbc18;transform:scaleX(0.8843);transform-origin:0 50%;">G1</span>
<span class="t" style="left:813.0px;top:594.5px;line-height:14px;font-size:10px;color:#dcdcdc;letter-spacing:-0.011px;">X99.198 Y128.451 E-.01498</span>
<span class="t" style="left:755.8px;top:609.4px;line-height:14px;font-size:10px;color:#d8834a;letter-spacing:0.125px;">467699</span>
<span class="t" style="left:796.6px;top:609.4px;line-height:14px;font-size:10px;color:#bcbc18;transform:scaleX(0.8843);transform-origin:0 50%;">G1</span>
<span class="t" style="left:813.0px;top:609.4px;line-height:14px;font-size:10px;color:#dcdcdc;letter-spacing:-0.011px;">X99.457 Y128.513 E-.01597</span>
<span class="t" style="left:755.8px;top:624.3px;line-height:14px;font-size:10px;color:#d8834a;letter-spacing:0.125px;">467700</span>
<span class="t" style="left:796.6px;top:624.3px;line-height:14px;font-size:10px;color:#bcbc18;transform:scaleX(0.8843);transform-origin:0 50%;">G1</span>
<span class="t" style="left:813.0px;top:624.3px;line-height:14px;font-size:10px;color:#dcdcdc;letter-spacing:-0.011px;">X99.699 Y128.645 E-.01653</span>
<span class="t" style="left:755.8px;top:639.3px;line-height:14px;font-size:10px;color:#d8834a;letter-spacing:0.125px;">467701</span>
<span class="t" style="left:796.6px;top:639.3px;line-height:14px;font-size:10px;color:#bcbc18;transform:scaleX(0.8843);transform-origin:0 50%;">G1</span>
<span class="t" style="left:813.0px;top:639.3px;line-height:14px;font-size:10px;color:#dcdcdc;letter-spacing:-0.011px;">X99.882 Y128.807 E-.01465</span>
<span class="t" style="left:755.8px;top:654.2px;line-height:14px;font-size:10px;color:#d8834a;letter-spacing:0.125px;">467702</span>
<span class="t" style="left:796.6px;top:654.2px;line-height:14px;font-size:10px;color:#bcbc18;transform:scaleX(0.8843);transform-origin:0 50%;">G1</span>
<span class="t" style="left:813.0px;top:654.2px;line-height:14px;font-size:10px;color:#dcdcdc;letter-spacing:-0.010px;">X99.979 Y128.94 E-.00987</span>
<span class="t" style="left:755.8px;top:669.1px;line-height:14px;font-size:10px;color:#d8834a;letter-spacing:0.125px;">467703</span>
<span class="t" style="left:796.6px;top:669.1px;line-height:14px;font-size:10px;color:#8e8e8e;letter-spacing:-0.514px;">;WIPE_END</span>
<span class="t" style="left:755.8px;top:684.1px;line-height:14px;font-size:10px;color:#d8834a;letter-spacing:0.125px;">467704</span>
<span class="t" style="left:796.6px;top:684.1px;line-height:14px;font-size:10px;color:#bcbc18;letter-spacing:0.128px;">M106</span>
<span class="t" style="left:825.6px;top:684.1px;line-height:14px;font-size:10px;color:#dcdcdc;letter-spacing:-0.024px;">S0</span>
<span class="t" style="left:755.8px;top:699.0px;line-height:14px;font-size:10px;color:#d8834a;letter-spacing:0.125px;">467705</span>
<span class="t" style="left:796.6px;top:699.0px;line-height:14px;font-size:10px;color:#bcbc18;letter-spacing:0.128px;">M106</span>
<span class="t" style="left:825.6px;top:699.0px;line-height:14px;font-size:10px;color:#dcdcdc;letter-spacing:-0.014px;">P2 S0</span>
<div class="a" style="left:752.5px;top:533.8px;width:190.5px;height:16.0px;border:1px solid #d8834a"></div>
<div class="a" style="left:984.4px;top:157px;width:10.600000000000023px;height:521px;background:#ffffff;border-radius:2px"></div>
<div class="a" style="left:987px;top:157px;width:5.399999999999977px;height:521px;background:#1777fa"></div>
<div class="a" style="left:948.8px;top:131.2px;width:30.40000000000009px;height:25.80000000000001px;background:#ffffff"></div>
<svg style="left:977px;top:150px" width="10" height="8" viewBox="0 0 10 8"><path d="M0,0 L2,0 L9,7 L0,7 Z" fill="#ffffff"/></svg>
<span class="t" style="left:956.0px;top:131.4px;line-height:14px;font-size:10px;color:#3a94c9;letter-spacing:-0.044px;">300</span>
<span class="t" style="left:951.0px;top:143.3px;line-height:14px;font-size:10px;color:#3a94c9;letter-spacing:-0.108px;">60.00</span>
<div class="a" style="left:984.2px;top:151.6px;width:10.799999999999955px;height:10.800000000000011px;background:#1777fa;border:1px solid #fff;border-radius:50%"></div>
<svg style="left:984.5px;top:152px" width="10" height="10" viewBox="0 0 10 10"><path d="M5,2 V8 M2,5 H8" stroke="#fff" stroke-width="1.2"/></svg>
<div class="a" style="left:983.9px;top:671.6px;width:10.800000000000068px;height:10.799999999999955px;background:#1777fa;border:1px solid #fff;border-radius:50%"></div>
<div class="a" style="left:952px;top:677.5px;width:27.200000000000045px;height:24.5px;background:#ffffff"></div>
<svg style="left:977px;top:677.5px" width="8" height="6" viewBox="0 0 8 6"><path d="M0,0 L7,0 L0,6 Z" fill="#ffffff"/></svg>
<span class="t" style="left:964.5px;top:677.0px;line-height:14px;font-size:10px;color:#3a94c9;">1</span>
<span class="t" style="left:957.0px;top:688.6px;line-height:14px;font-size:10px;color:#3a94c9;letter-spacing:-0.290px;">0.20</span>
<div class="a" style="left:447.5px;top:760.4px;width:378.5px;height:10.0px;background:#ffffff;border-radius:5px"></div>
<div class="a" style="left:449.5px;top:762.4px;width:375.5px;height:6.2000000000000455px;background:#1777fa;border-radius:3px"></div>
<div class="a" style="left:819px;top:758.8px;width:12.399999999999977px;height:12.400000000000091px;background:#1777fa;border:1.2px solid #fff;border-radius:50%"></div>
<div class="a" style="left:835px;top:758.6px;width:28px;height:12.799999999999955px;background:#ffffff"></div>
<svg style="left:830px;top:762px" width="6" height="6" viewBox="0 0 6 6"><path d="M5.5,0 L0,3 L5.5,6 Z" fill="#ffffff"/></svg>
<span class="t" style="left:838.0px;top:758.2px;line-height:14px;font-size:10px;color:#3a94c9;letter-spacing:-0.083px;">1515</span>
<svg style="left:969px;top:744px" width="29" height="29" viewBox="0 0 29 29"><g stroke="#ffffff" stroke-width="2.4" stroke-linejoin="round" fill="#ffffff"><path d="M14.5,3 L26.5,9 L14.5,15 L2.5,9 Z"/><path d="M14.5,9 L26.5,14.6 L14.5,20.6 L2.5,14.6 Z"/><path d="M14.5,14.6 L26.5,20.2 L14.5,26.2 L2.5,20.2 Z"/></g><g fill="#0b5fc0"><path d="M14.5,14.6 L26.5,20.2 L14.5,26.2 L2.5,20.2 Z"/><path d="M14.5,9.2 L26.5,14.6 L14.5,20.6 L2.5,14.6 Z" stroke="#fff" stroke-width="1"/><path d="M14.5,3 L26.5,9 L14.5,15 L2.5,9 Z" stroke="#fff" stroke-width="1"/></g></svg>
<svg style="left:436px;top:406px" width="12" height="18" viewBox="0 0 12 18"><path d="M1,1 V13.6 L3.9,11 L5.9,15.6 L7.9,14.7 L5.9,10.3 H9.9 Z" fill="#ffffff" stroke="#1a1a1a" stroke-width="0.9" stroke-linejoin="round"/></svg>
</div></body></html>
